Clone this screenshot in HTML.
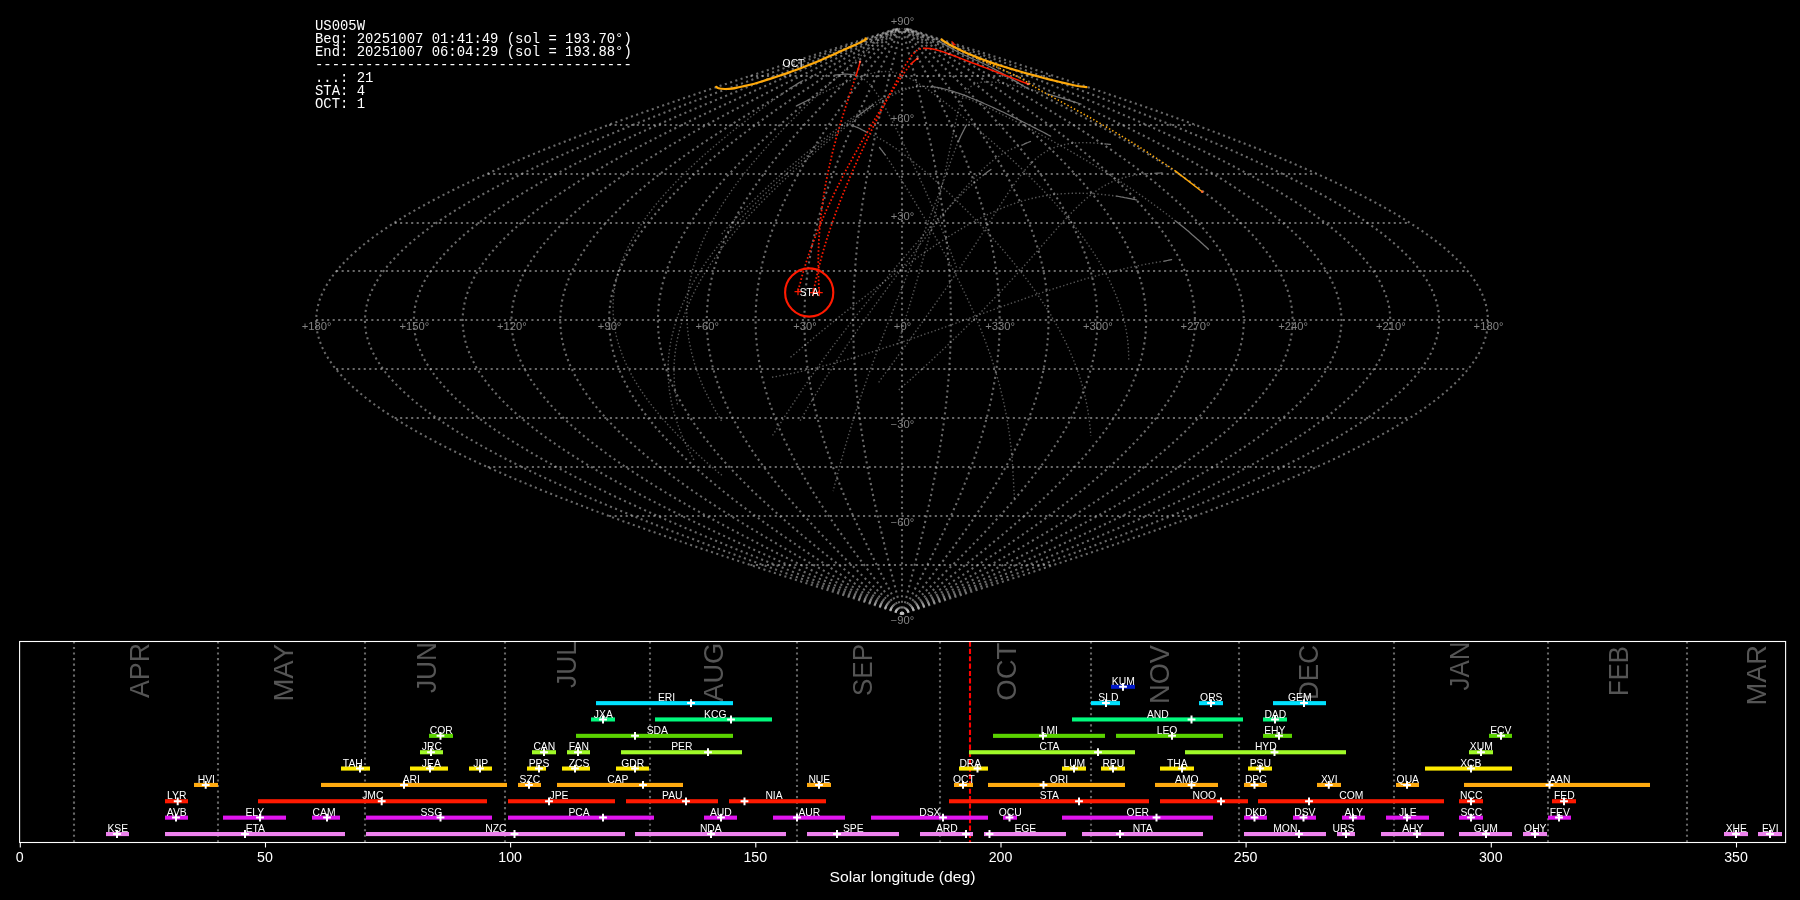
<!DOCTYPE html>
<html><head><meta charset="utf-8"><title>US005W shower association</title>
<style>html,body{margin:0;padding:0;background:#000;overflow:hidden}svg{display:block}text{font-family:"Liberation Sans",sans-serif}.mono{font-family:"Liberation Mono",monospace;font-size:13.9px;fill:#fff;white-space:pre}.g{fill:none;stroke:#c0c0c0;stroke-opacity:.55;stroke-width:2.08;stroke-dasharray:2.08 3.44}.fg{fill:none;stroke:#fff;stroke-opacity:.34;stroke-width:1.39;stroke-dasharray:1.39 2.29}.gl{font-size:10.3px;fill:#828282;text-anchor:middle}.sl{font-size:11.2px;fill:#fff;text-anchor:middle}.mo{font-size:28.3px;fill:#555;text-anchor:end}.tk{font-size:14.2px;fill:#fff;text-anchor:middle}</style></head><body>
<svg width="1800" height="900" viewBox="0 0 1800 900">
<defs><filter id="nf" x="0" y="0" width="100%" height="100%" filterUnits="userSpaceOnUse" color-interpolation-filters="sRGB"><feColorMatrix type="matrix" values="1 0 0 0 0 0 1 0 0 0 0 0 1 0 0 0 0 0 1 0"/></filter></defs>
<rect width="1800" height="900" fill="#000"/>
<g filter="url(#nf)">
<g class="g">
<path d="M902 613.9 L922.5 607.4 L942.9 600.8 L963.3 594.3 L983.6 587.8 L1003.8 581.3 L1023.9 574.8 L1043.8 568.2 L1063.6 561.7 L1083.1 555.2 L1102.5 548.7 L1121.6 542.1 L1140.4 535.6 L1158.9 529.1 L1177.1 522.6 L1195 516.1 L1212.6 509.5 L1229.7 503 L1246.5 496.5 L1262.8 490 L1278.7 483.4 L1294.1 476.9 L1309.1 470.4 L1323.6 463.9 L1337.5 457.4 L1350.9 450.8 L1363.8 444.3 L1376.1 437.8 L1387.8 431.3 L1399 424.8 L1409.5 418.2 L1419.4 411.7 L1428.7 405.2 L1437.3 398.7 L1445.3 392.1 L1452.7 385.6 L1459.3 379.1 L1465.3 372.6 L1470.6 366.1 L1475.2 359.5 L1479.1 353 L1482.3 346.5 L1484.8 340 L1486.6 333.4 L1487.6 326.9 L1488 320.4 L1487.6 313.9 L1486.6 307.4 L1484.8 300.8 L1482.3 294.3 L1479.1 287.8 L1475.2 281.3 L1470.6 274.7 L1465.3 268.2 L1459.3 261.7 L1452.7 255.2 L1445.3 248.7 L1437.3 242.1 L1428.7 235.6 L1419.4 229.1 L1409.5 222.6 L1399 216 L1387.8 209.5 L1376.1 203 L1363.8 196.5 L1350.9 190 L1337.5 183.4 L1323.6 176.9 L1309.1 170.4 L1294.1 163.9 L1278.7 157.3 L1262.8 150.8 L1246.5 144.3 L1229.7 137.8 L1212.6 131.3 L1195 124.7 L1177.1 118.2 L1158.9 111.7 L1140.4 105.2 L1121.6 98.7 L1102.5 92.1 L1083.1 85.6 L1063.6 79.1 L1043.8 72.6 L1023.9 66 L1003.8 59.5 L983.6 53 L963.3 46.5 L942.9 40 L922.5 33.4 L907.2 28.5"/>
<path d="M902 613.9 L920.8 607.4 L939.5 600.8 L958.2 594.3 L976.8 587.8 L995.3 581.3 L1013.7 574.8 L1032 568.2 L1050.1 561.7 L1068 555.2 L1085.8 548.7 L1103.3 542.1 L1120.5 535.6 L1137.5 529.1 L1154.2 522.6 L1170.6 516.1 L1186.7 509.5 L1202.4 503 L1217.8 496.5 L1232.7 490 L1247.3 483.4 L1261.5 476.9 L1275.2 470.4 L1288.4 463.9 L1301.2 457.4 L1313.5 450.8 L1325.3 444.3 L1336.6 437.8 L1347.3 431.3 L1357.6 424.8 L1367.2 418.2 L1376.3 411.7 L1384.8 405.2 L1392.7 398.7 L1400.1 392.1 L1406.8 385.6 L1412.9 379.1 L1418.4 372.6 L1423.2 366.1 L1427.4 359.5 L1431 353 L1433.9 346.5 L1436.2 340 L1437.9 333.4 L1438.8 326.9 L1439.2 320.4 L1438.8 313.9 L1437.9 307.4 L1436.2 300.8 L1433.9 294.3 L1431 287.8 L1427.4 281.3 L1423.2 274.7 L1418.4 268.2 L1412.9 261.7 L1406.8 255.2 L1400.1 248.7 L1392.7 242.1 L1384.8 235.6 L1376.3 229.1 L1367.2 222.6 L1357.6 216 L1347.3 209.5 L1336.6 203 L1325.3 196.5 L1313.5 190 L1301.2 183.4 L1288.4 176.9 L1275.2 170.4 L1261.5 163.9 L1247.3 157.3 L1232.7 150.8 L1217.8 144.3 L1202.4 137.8 L1186.7 131.3 L1170.6 124.7 L1154.2 118.2 L1137.5 111.7 L1120.5 105.2 L1103.3 98.7 L1085.8 92.1 L1068 85.6 L1050.1 79.1 L1032 72.6 L1013.7 66 L995.3 59.5 L976.8 53 L958.2 46.5 L939.5 40 L920.8 33.4 L906.7 28.5"/>
<path d="M902 613.9 L919.1 607.4 L936.1 600.8 L953.1 594.3 L970 587.8 L986.8 581.3 L1003.6 574.8 L1020.2 568.2 L1036.6 561.7 L1052.9 555.2 L1069.1 548.7 L1085 542.1 L1100.7 535.6 L1116.1 529.1 L1131.3 522.6 L1146.2 516.1 L1160.8 509.5 L1175.1 503 L1189.1 496.5 L1202.7 490 L1215.9 483.4 L1228.8 476.9 L1241.2 470.4 L1253.3 463.9 L1264.9 457.4 L1276.1 450.8 L1286.8 444.3 L1297.1 437.8 L1306.9 431.3 L1316.1 424.8 L1324.9 418.2 L1333.2 411.7 L1340.9 405.2 L1348.1 398.7 L1354.8 392.1 L1360.9 385.6 L1366.4 379.1 L1371.4 372.6 L1375.8 366.1 L1379.7 359.5 L1382.9 353 L1385.6 346.5 L1387.7 340 L1389.2 333.4 L1390 326.9 L1390.3 320.4 L1390 313.9 L1389.2 307.4 L1387.7 300.8 L1385.6 294.3 L1382.9 287.8 L1379.7 281.3 L1375.8 274.7 L1371.4 268.2 L1366.4 261.7 L1360.9 255.2 L1354.8 248.7 L1348.1 242.1 L1340.9 235.6 L1333.2 229.1 L1324.9 222.6 L1316.1 216 L1306.9 209.5 L1297.1 203 L1286.8 196.5 L1276.1 190 L1264.9 183.4 L1253.3 176.9 L1241.2 170.4 L1228.8 163.9 L1215.9 157.3 L1202.7 150.8 L1189.1 144.3 L1175.1 137.8 L1160.8 131.3 L1146.2 124.7 L1131.3 118.2 L1116.1 111.7 L1100.7 105.2 L1085 98.7 L1069.1 92.1 L1052.9 85.6 L1036.6 79.1 L1020.2 72.6 L1003.6 66 L986.8 59.5 L970 53 L953.1 46.5 L936.1 40 L919.1 33.4 L906.3 28.5"/>
<path d="M902 613.9 L917.4 607.4 L932.7 600.8 L948 594.3 L963.2 587.8 L978.4 581.3 L993.4 574.8 L1008.4 568.2 L1023.2 561.7 L1037.9 555.2 L1052.4 548.7 L1066.7 542.1 L1080.8 535.6 L1094.7 529.1 L1108.4 522.6 L1121.8 516.1 L1134.9 509.5 L1147.8 503 L1160.4 496.5 L1172.6 490 L1184.5 483.4 L1196.1 476.9 L1207.3 470.4 L1218.2 463.9 L1228.6 457.4 L1238.7 450.8 L1248.4 444.3 L1257.6 437.8 L1266.4 431.3 L1274.7 424.8 L1282.6 418.2 L1290.1 411.7 L1297 405.2 L1303.5 398.7 L1309.5 392.1 L1315 385.6 L1320 379.1 L1324.5 372.6 L1328.5 366.1 L1331.9 359.5 L1334.8 353 L1337.2 346.5 L1339.1 340 L1340.4 333.4 L1341.2 326.9 L1341.5 320.4 L1341.2 313.9 L1340.4 307.4 L1339.1 300.8 L1337.2 294.3 L1334.8 287.8 L1331.9 281.3 L1328.5 274.7 L1324.5 268.2 L1320 261.7 L1315 255.2 L1309.5 248.7 L1303.5 242.1 L1297 235.6 L1290.1 229.1 L1282.6 222.6 L1274.7 216 L1266.4 209.5 L1257.6 203 L1248.4 196.5 L1238.7 190 L1228.6 183.4 L1218.2 176.9 L1207.3 170.4 L1196.1 163.9 L1184.5 157.3 L1172.6 150.8 L1160.4 144.3 L1147.8 137.8 L1134.9 131.3 L1121.8 124.7 L1108.4 118.2 L1094.7 111.7 L1080.8 105.2 L1066.7 98.7 L1052.4 92.1 L1037.9 85.6 L1023.2 79.1 L1008.4 72.6 L993.4 66 L978.4 59.5 L963.2 53 L948 46.5 L932.7 40 L917.4 33.4 L905.9 28.5"/>
<path d="M902 613.9 L915.7 607.4 L929.3 600.8 L942.9 594.3 L956.4 587.8 L969.9 581.3 L983.3 574.8 L996.6 568.2 L1009.7 561.7 L1022.8 555.2 L1035.7 548.7 L1048.4 542.1 L1060.9 535.6 L1073.3 529.1 L1085.4 522.6 L1097.4 516.1 L1109.1 509.5 L1120.5 503 L1131.7 496.5 L1142.5 490 L1153.1 483.4 L1163.4 476.9 L1173.4 470.4 L1183.1 463.9 L1192.3 457.4 L1201.3 450.8 L1209.9 444.3 L1218.1 437.8 L1225.9 431.3 L1233.3 424.8 L1240.4 418.2 L1247 411.7 L1253.2 405.2 L1258.9 398.7 L1264.2 392.1 L1269.1 385.6 L1273.6 379.1 L1277.6 372.6 L1281.1 366.1 L1284.1 359.5 L1286.8 353 L1288.9 346.5 L1290.5 340 L1291.7 333.4 L1292.4 326.9 L1292.7 320.4 L1292.4 313.9 L1291.7 307.4 L1290.5 300.8 L1288.9 294.3 L1286.8 287.8 L1284.1 281.3 L1281.1 274.7 L1277.6 268.2 L1273.6 261.7 L1269.1 255.2 L1264.2 248.7 L1258.9 242.1 L1253.2 235.6 L1247 229.1 L1240.4 222.6 L1233.3 216 L1225.9 209.5 L1218.1 203 L1209.9 196.5 L1201.3 190 L1192.3 183.4 L1183.1 176.9 L1173.4 170.4 L1163.4 163.9 L1153.1 157.3 L1142.5 150.8 L1131.7 144.3 L1120.5 137.8 L1109.1 131.3 L1097.4 124.7 L1085.4 118.2 L1073.3 111.7 L1060.9 105.2 L1048.4 98.7 L1035.7 92.1 L1022.8 85.6 L1009.7 79.1 L996.6 72.6 L983.3 66 L969.9 59.5 L956.4 53 L942.9 46.5 L929.3 40 L915.7 33.4 L905.5 28.5"/>
<path d="M902 613.9 L914 607.4 L925.9 600.8 L937.8 594.3 L949.6 587.8 L961.4 581.3 L973.1 574.8 L984.7 568.2 L996.3 561.7 L1007.7 555.2 L1019 548.7 L1030.1 542.1 L1041.1 535.6 L1051.9 529.1 L1062.5 522.6 L1073 516.1 L1083.2 509.5 L1093.2 503 L1103 496.5 L1112.5 490 L1121.8 483.4 L1130.8 476.9 L1139.5 470.4 L1147.9 463.9 L1156.1 457.4 L1163.9 450.8 L1171.4 444.3 L1178.6 437.8 L1185.4 431.3 L1191.9 424.8 L1198.1 418.2 L1203.8 411.7 L1209.3 405.2 L1214.3 398.7 L1219 392.1 L1223.2 385.6 L1227.1 379.1 L1230.6 372.6 L1233.7 366.1 L1236.4 359.5 L1238.7 353 L1240.5 346.5 L1242 340 L1243 333.4 L1243.6 326.9 L1243.9 320.4 L1243.6 313.9 L1243 307.4 L1242 300.8 L1240.5 294.3 L1238.7 287.8 L1236.4 281.3 L1233.7 274.7 L1230.6 268.2 L1227.1 261.7 L1223.2 255.2 L1219 248.7 L1214.3 242.1 L1209.3 235.6 L1203.8 229.1 L1198.1 222.6 L1191.9 216 L1185.4 209.5 L1178.6 203 L1171.4 196.5 L1163.9 190 L1156.1 183.4 L1147.9 176.9 L1139.5 170.4 L1130.8 163.9 L1121.8 157.3 L1112.5 150.8 L1103 144.3 L1093.2 137.8 L1083.2 131.3 L1073 124.7 L1062.5 118.2 L1051.9 111.7 L1041.1 105.2 L1030.1 98.7 L1019 92.1 L1007.7 85.6 L996.3 79.1 L984.7 72.6 L973.1 66 L961.4 59.5 L949.6 53 L937.8 46.5 L925.9 40 L914 33.4 L905 28.5"/>
<path d="M902 613.9 L912.3 607.4 L922.5 600.8 L932.7 594.3 L942.8 587.8 L952.9 581.3 L963 574.8 L972.9 568.2 L982.8 561.7 L992.6 555.2 L1002.3 548.7 L1011.8 542.1 L1021.2 535.6 L1030.5 529.1 L1039.6 522.6 L1048.5 516.1 L1057.3 509.5 L1065.9 503 L1074.3 496.5 L1082.4 490 L1090.4 483.4 L1098.1 476.9 L1105.6 470.4 L1112.8 463.9 L1119.8 457.4 L1126.5 450.8 L1132.9 444.3 L1139.1 437.8 L1144.9 431.3 L1150.5 424.8 L1155.8 418.2 L1160.7 411.7 L1165.4 405.2 L1169.7 398.7 L1173.7 392.1 L1177.4 385.6 L1180.7 379.1 L1183.7 372.6 L1186.3 366.1 L1188.6 359.5 L1190.6 353 L1192.2 346.5 L1193.4 340 L1194.3 333.4 L1194.8 326.9 L1195 320.4 L1194.8 313.9 L1194.3 307.4 L1193.4 300.8 L1192.2 294.3 L1190.6 287.8 L1188.6 281.3 L1186.3 274.7 L1183.7 268.2 L1180.7 261.7 L1177.4 255.2 L1173.7 248.7 L1169.7 242.1 L1165.4 235.6 L1160.7 229.1 L1155.8 222.6 L1150.5 216 L1144.9 209.5 L1139.1 203 L1132.9 196.5 L1126.5 190 L1119.8 183.4 L1112.8 176.9 L1105.6 170.4 L1098.1 163.9 L1090.4 157.3 L1082.4 150.8 L1074.3 144.3 L1065.9 137.8 L1057.3 131.3 L1048.5 124.7 L1039.6 118.2 L1030.5 111.7 L1021.2 105.2 L1011.8 98.7 L1002.3 92.1 L992.6 85.6 L982.8 79.1 L972.9 72.6 L963 66 L952.9 59.5 L942.8 53 L932.7 46.5 L922.5 40 L912.3 33.4 L904.6 28.5"/>
<path d="M902 613.9 L910.6 607.4 L919.1 600.8 L927.6 594.3 L936 587.8 L944.4 581.3 L952.8 574.8 L961.1 568.2 L969.3 561.7 L977.5 555.2 L985.6 548.7 L993.5 542.1 L1001.4 535.6 L1009.1 529.1 L1016.7 522.6 L1024.1 516.1 L1031.4 509.5 L1038.6 503 L1045.6 496.5 L1052.4 490 L1059 483.4 L1065.4 476.9 L1071.6 470.4 L1077.7 463.9 L1083.5 457.4 L1089.1 450.8 L1094.4 444.3 L1099.6 437.8 L1104.5 431.3 L1109.1 424.8 L1113.5 418.2 L1117.6 411.7 L1121.5 405.2 L1125.1 398.7 L1128.4 392.1 L1131.5 385.6 L1134.2 379.1 L1136.7 372.6 L1138.9 366.1 L1140.9 359.5 L1142.5 353 L1143.8 346.5 L1144.9 340 L1145.6 333.4 L1146 326.9 L1146.2 320.4 L1146 313.9 L1145.6 307.4 L1144.9 300.8 L1143.8 294.3 L1142.5 287.8 L1140.9 281.3 L1138.9 274.7 L1136.7 268.2 L1134.2 261.7 L1131.5 255.2 L1128.4 248.7 L1125.1 242.1 L1121.5 235.6 L1117.6 229.1 L1113.5 222.6 L1109.1 216 L1104.5 209.5 L1099.6 203 L1094.4 196.5 L1089.1 190 L1083.5 183.4 L1077.7 176.9 L1071.6 170.4 L1065.4 163.9 L1059 157.3 L1052.4 150.8 L1045.6 144.3 L1038.6 137.8 L1031.4 131.3 L1024.1 124.7 L1016.7 118.2 L1009.1 111.7 L1001.4 105.2 L993.5 98.7 L985.6 92.1 L977.5 85.6 L969.3 79.1 L961.1 72.6 L952.8 66 L944.4 59.5 L936 53 L927.6 46.5 L919.1 40 L910.6 33.4 L904.2 28.5"/>
<path d="M902 613.9 L908.9 607.4 L915.7 600.8 L922.5 594.3 L929.2 587.8 L936 581.3 L942.7 574.8 L949.3 568.2 L955.9 561.7 L962.4 555.2 L968.9 548.7 L975.2 542.1 L981.5 535.6 L987.7 529.1 L993.7 522.6 L999.7 516.1 L1005.6 509.5 L1011.3 503 L1016.9 496.5 L1022.3 490 L1027.6 483.4 L1032.7 476.9 L1037.7 470.4 L1042.6 463.9 L1047.2 457.4 L1051.7 450.8 L1056 444.3 L1060.1 437.8 L1064 431.3 L1067.7 424.8 L1071.2 418.2 L1074.5 411.7 L1077.6 405.2 L1080.5 398.7 L1083.1 392.1 L1085.6 385.6 L1087.8 379.1 L1089.8 372.6 L1091.6 366.1 L1093.1 359.5 L1094.4 353 L1095.5 346.5 L1096.3 340 L1096.9 333.4 L1097.2 326.9 L1097.4 320.4 L1097.2 313.9 L1096.9 307.4 L1096.3 300.8 L1095.5 294.3 L1094.4 287.8 L1093.1 281.3 L1091.6 274.7 L1089.8 268.2 L1087.8 261.7 L1085.6 255.2 L1083.1 248.7 L1080.5 242.1 L1077.6 235.6 L1074.5 229.1 L1071.2 222.6 L1067.7 216 L1064 209.5 L1060.1 203 L1056 196.5 L1051.7 190 L1047.2 183.4 L1042.6 176.9 L1037.7 170.4 L1032.7 163.9 L1027.6 157.3 L1022.3 150.8 L1016.9 144.3 L1011.3 137.8 L1005.6 131.3 L999.7 124.7 L993.7 118.2 L987.7 111.7 L981.5 105.2 L975.2 98.7 L968.9 92.1 L962.4 85.6 L955.9 79.1 L949.3 72.6 L942.7 66 L936 59.5 L929.2 53 L922.5 46.5 L915.7 40 L908.9 33.4 L903.8 28.5"/>
<path d="M902 613.9 L907.2 607.4 L912.3 600.8 L917.4 594.3 L922.4 587.8 L927.5 581.3 L932.5 574.8 L937.5 568.2 L942.4 561.7 L947.3 555.2 L952.2 548.7 L956.9 542.1 L961.6 535.6 L966.3 529.1 L970.8 522.6 L975.3 516.1 L979.7 509.5 L984 503 L988.2 496.5 L992.2 490 L996.2 483.4 L1000.1 476.9 L1003.8 470.4 L1007.4 463.9 L1010.9 457.4 L1014.3 450.8 L1017.5 444.3 L1020.6 437.8 L1023.5 431.3 L1026.3 424.8 L1028.9 418.2 L1031.4 411.7 L1033.7 405.2 L1035.9 398.7 L1037.9 392.1 L1039.7 385.6 L1041.4 379.1 L1042.9 372.6 L1044.2 366.1 L1045.3 359.5 L1046.3 353 L1047.1 346.5 L1047.7 340 L1048.2 333.4 L1048.4 326.9 L1048.5 320.4 L1048.4 313.9 L1048.2 307.4 L1047.7 300.8 L1047.1 294.3 L1046.3 287.8 L1045.3 281.3 L1044.2 274.7 L1042.9 268.2 L1041.4 261.7 L1039.7 255.2 L1037.9 248.7 L1035.9 242.1 L1033.7 235.6 L1031.4 229.1 L1028.9 222.6 L1026.3 216 L1023.5 209.5 L1020.6 203 L1017.5 196.5 L1014.3 190 L1010.9 183.4 L1007.4 176.9 L1003.8 170.4 L1000.1 163.9 L996.2 157.3 L992.2 150.8 L988.2 144.3 L984 137.8 L979.7 131.3 L975.3 124.7 L970.8 118.2 L966.3 111.7 L961.6 105.2 L956.9 98.7 L952.2 92.1 L947.3 85.6 L942.4 79.1 L937.5 72.6 L932.5 66 L927.5 59.5 L922.4 53 L917.4 46.5 L912.3 40 L907.2 33.4 L903.3 28.5"/>
<path d="M902 613.9 L905.5 607.4 L908.9 600.8 L912.3 594.3 L915.6 587.8 L919 581.3 L922.4 574.8 L925.7 568.2 L929 561.7 L932.2 555.2 L935.5 548.7 L938.6 542.1 L941.8 535.6 L944.9 529.1 L947.9 522.6 L950.9 516.1 L953.8 509.5 L956.7 503 L959.5 496.5 L962.2 490 L964.8 483.4 L967.4 476.9 L969.9 470.4 L972.3 463.9 L974.6 457.4 L976.9 450.8 L979 444.3 L981.1 437.8 L983 431.3 L984.9 424.8 L986.6 418.2 L988.3 411.7 L989.8 405.2 L991.3 398.7 L992.6 392.1 L993.8 385.6 L994.9 379.1 L995.9 372.6 L996.8 366.1 L997.6 359.5 L998.2 353 L998.8 346.5 L999.2 340 L999.5 333.4 L999.6 326.9 L999.7 320.4 L999.6 313.9 L999.5 307.4 L999.2 300.8 L998.8 294.3 L998.2 287.8 L997.6 281.3 L996.8 274.7 L995.9 268.2 L994.9 261.7 L993.8 255.2 L992.6 248.7 L991.3 242.1 L989.8 235.6 L988.3 229.1 L986.6 222.6 L984.9 216 L983 209.5 L981.1 203 L979 196.5 L976.9 190 L974.6 183.4 L972.3 176.9 L969.9 170.4 L967.4 163.9 L964.8 157.3 L962.2 150.8 L959.5 144.3 L956.7 137.8 L953.8 131.3 L950.9 124.7 L947.9 118.2 L944.9 111.7 L941.8 105.2 L938.6 98.7 L935.5 92.1 L932.2 85.6 L929 79.1 L925.7 72.6 L922.4 66 L919 59.5 L915.6 53 L912.3 46.5 L908.9 40 L905.5 33.4 L902.9 28.5"/>
<path d="M902 613.9 L903.8 607.4 L905.5 600.8 L907.2 594.3 L908.8 587.8 L910.5 581.3 L912.2 574.8 L913.9 568.2 L915.5 561.7 L917.1 555.2 L918.8 548.7 L920.3 542.1 L921.9 535.6 L923.5 529.1 L925 522.6 L926.5 516.1 L927.9 509.5 L929.4 503 L930.8 496.5 L932.1 490 L933.4 483.4 L934.7 476.9 L936 470.4 L937.2 463.9 L938.3 457.4 L939.5 450.8 L940.5 444.3 L941.6 437.8 L942.5 431.3 L943.5 424.8 L944.3 418.2 L945.2 411.7 L945.9 405.2 L946.7 398.7 L947.3 392.1 L947.9 385.6 L948.5 379.1 L949 372.6 L949.4 366.1 L949.8 359.5 L950.1 353 L950.4 346.5 L950.6 340 L950.8 333.4 L950.8 326.9 L950.9 320.4 L950.8 313.9 L950.8 307.4 L950.6 300.8 L950.4 294.3 L950.1 287.8 L949.8 281.3 L949.4 274.7 L949 268.2 L948.5 261.7 L947.9 255.2 L947.3 248.7 L946.7 242.1 L945.9 235.6 L945.2 229.1 L944.3 222.6 L943.5 216 L942.5 209.5 L941.6 203 L940.5 196.5 L939.5 190 L938.3 183.4 L937.2 176.9 L936 170.4 L934.7 163.9 L933.4 157.3 L932.1 150.8 L930.8 144.3 L929.4 137.8 L927.9 131.3 L926.5 124.7 L925 118.2 L923.5 111.7 L921.9 105.2 L920.3 98.7 L918.8 92.1 L917.1 85.6 L915.5 79.1 L913.9 72.6 L912.2 66 L910.5 59.5 L908.8 53 L907.2 46.5 L905.5 40 L903.8 33.4 L902.5 28.5"/>
<path d="M902 613.9 L902 607.4 L902 600.8 L902 594.3 L902 587.8 L902 581.3 L902 574.8 L902 568.2 L902 561.7 L902 555.2 L902 548.7 L902 542.1 L902 535.6 L902 529.1 L902 522.6 L902 516.1 L902 509.5 L902 503 L902 496.5 L902 490 L902 483.4 L902 476.9 L902 470.4 L902 463.9 L902 457.4 L902 450.8 L902 444.3 L902 437.8 L902 431.3 L902 424.8 L902 418.2 L902 411.7 L902 405.2 L902 398.7 L902 392.1 L902 385.6 L902 379.1 L902 372.6 L902 366.1 L902 359.5 L902 353 L902 346.5 L902 340 L902 333.4 L902 326.9 L902 320.4 L902 313.9 L902 307.4 L902 300.8 L902 294.3 L902 287.8 L902 281.3 L902 274.7 L902 268.2 L902 261.7 L902 255.2 L902 248.7 L902 242.1 L902 235.6 L902 229.1 L902 222.6 L902 216 L902 209.5 L902 203 L902 196.5 L902 190 L902 183.4 L902 176.9 L902 170.4 L902 163.9 L902 157.3 L902 150.8 L902 144.3 L902 137.8 L902 131.3 L902 124.7 L902 118.2 L902 111.7 L902 105.2 L902 98.7 L902 92.1 L902 85.6 L902 79.1 L902 72.6 L902 66 L902 59.5 L902 53 L902 46.5 L902 40 L902 33.4 L902 28.5"/>
<path d="M902 613.9 L900.3 607.4 L898.6 600.8 L896.9 594.3 L895.3 587.8 L893.6 581.3 L891.9 574.8 L890.2 568.2 L888.6 561.7 L887 555.2 L885.3 548.7 L883.8 542.1 L882.2 535.6 L880.6 529.1 L879.1 522.6 L877.6 516.1 L876.2 509.5 L874.7 503 L873.3 496.5 L872 490 L870.7 483.4 L869.4 476.9 L868.1 470.4 L866.9 463.9 L865.8 457.4 L864.6 450.8 L863.6 444.3 L862.5 437.8 L861.6 431.3 L860.6 424.8 L859.8 418.2 L858.9 411.7 L858.2 405.2 L857.4 398.7 L856.8 392.1 L856.2 385.6 L855.6 379.1 L855.1 372.6 L854.7 366.1 L854.3 359.5 L854 353 L853.7 346.5 L853.5 340 L853.3 333.4 L853.3 326.9 L853.2 320.4 L853.3 313.9 L853.3 307.4 L853.5 300.8 L853.7 294.3 L854 287.8 L854.3 281.3 L854.7 274.7 L855.1 268.2 L855.6 261.7 L856.2 255.2 L856.8 248.7 L857.4 242.1 L858.2 235.6 L858.9 229.1 L859.8 222.6 L860.6 216 L861.6 209.5 L862.5 203 L863.6 196.5 L864.6 190 L865.8 183.4 L866.9 176.9 L868.1 170.4 L869.4 163.9 L870.7 157.3 L872 150.8 L873.3 144.3 L874.7 137.8 L876.2 131.3 L877.6 124.7 L879.1 118.2 L880.6 111.7 L882.2 105.2 L883.8 98.7 L885.3 92.1 L887 85.6 L888.6 79.1 L890.2 72.6 L891.9 66 L893.6 59.5 L895.3 53 L896.9 46.5 L898.6 40 L900.3 33.4 L901.6 28.5"/>
<path d="M902 613.9 L898.6 607.4 L895.2 600.8 L891.8 594.3 L888.5 587.8 L885.1 581.3 L881.7 574.8 L878.4 568.2 L875.1 561.7 L871.9 555.2 L868.6 548.7 L865.5 542.1 L862.3 535.6 L859.2 529.1 L856.2 522.6 L853.2 516.1 L850.3 509.5 L847.4 503 L844.6 496.5 L841.9 490 L839.3 483.4 L836.7 476.9 L834.2 470.4 L831.8 463.9 L829.5 457.4 L827.2 450.8 L825.1 444.3 L823 437.8 L821.1 431.3 L819.2 424.8 L817.5 418.2 L815.8 411.7 L814.3 405.2 L812.8 398.7 L811.5 392.1 L810.3 385.6 L809.2 379.1 L808.2 372.6 L807.3 366.1 L806.5 359.5 L805.9 353 L805.3 346.5 L804.9 340 L804.6 333.4 L804.5 326.9 L804.4 320.4 L804.5 313.9 L804.6 307.4 L804.9 300.8 L805.3 294.3 L805.9 287.8 L806.5 281.3 L807.3 274.7 L808.2 268.2 L809.2 261.7 L810.3 255.2 L811.5 248.7 L812.8 242.1 L814.3 235.6 L815.8 229.1 L817.5 222.6 L819.2 216 L821.1 209.5 L823 203 L825.1 196.5 L827.2 190 L829.5 183.4 L831.8 176.9 L834.2 170.4 L836.7 163.9 L839.3 157.3 L841.9 150.8 L844.6 144.3 L847.4 137.8 L850.3 131.3 L853.2 124.7 L856.2 118.2 L859.2 111.7 L862.3 105.2 L865.5 98.7 L868.6 92.1 L871.9 85.6 L875.1 79.1 L878.4 72.6 L881.7 66 L885.1 59.5 L888.5 53 L891.8 46.5 L895.2 40 L898.6 33.4 L901.2 28.5"/>
<path d="M902 613.9 L896.9 607.4 L891.8 600.8 L886.7 594.3 L881.7 587.8 L876.6 581.3 L871.6 574.8 L866.6 568.2 L861.7 561.7 L856.8 555.2 L851.9 548.7 L847.2 542.1 L842.5 535.6 L837.8 529.1 L833.3 522.6 L828.8 516.1 L824.4 509.5 L820.1 503 L815.9 496.5 L811.9 490 L807.9 483.4 L804 476.9 L800.3 470.4 L796.7 463.9 L793.2 457.4 L789.8 450.8 L786.6 444.3 L783.5 437.8 L780.6 431.3 L777.8 424.8 L775.2 418.2 L772.7 411.7 L770.4 405.2 L768.2 398.7 L766.2 392.1 L764.4 385.6 L762.7 379.1 L761.2 372.6 L759.9 366.1 L758.8 359.5 L757.8 353 L757 346.5 L756.4 340 L755.9 333.4 L755.7 326.9 L755.6 320.4 L755.7 313.9 L755.9 307.4 L756.4 300.8 L757 294.3 L757.8 287.8 L758.8 281.3 L759.9 274.7 L761.2 268.2 L762.7 261.7 L764.4 255.2 L766.2 248.7 L768.2 242.1 L770.4 235.6 L772.7 229.1 L775.2 222.6 L777.8 216 L780.6 209.5 L783.5 203 L786.6 196.5 L789.8 190 L793.2 183.4 L796.7 176.9 L800.3 170.4 L804 163.9 L807.9 157.3 L811.9 150.8 L815.9 144.3 L820.1 137.8 L824.4 131.3 L828.8 124.7 L833.3 118.2 L837.8 111.7 L842.5 105.2 L847.2 98.7 L851.9 92.1 L856.8 85.6 L861.7 79.1 L866.6 72.6 L871.6 66 L876.6 59.5 L881.7 53 L886.7 46.5 L891.8 40 L896.9 33.4 L900.8 28.5"/>
<path d="M902 613.9 L895.2 607.4 L888.4 600.8 L881.6 594.3 L874.9 587.8 L868.1 581.3 L861.4 574.8 L854.8 568.2 L848.2 561.7 L841.7 555.2 L835.2 548.7 L828.9 542.1 L822.6 535.6 L816.4 529.1 L810.4 522.6 L804.4 516.1 L798.5 509.5 L792.8 503 L787.2 496.5 L781.8 490 L776.5 483.4 L771.4 476.9 L766.4 470.4 L761.5 463.9 L756.9 457.4 L752.4 450.8 L748.1 444.3 L744 437.8 L740.1 431.3 L736.4 424.8 L732.9 418.2 L729.6 411.7 L726.5 405.2 L723.6 398.7 L721 392.1 L718.5 385.6 L716.3 379.1 L714.3 372.6 L712.5 366.1 L711 359.5 L709.7 353 L708.6 346.5 L707.8 340 L707.2 333.4 L706.9 326.9 L706.7 320.4 L706.9 313.9 L707.2 307.4 L707.8 300.8 L708.6 294.3 L709.7 287.8 L711 281.3 L712.5 274.7 L714.3 268.2 L716.3 261.7 L718.5 255.2 L721 248.7 L723.6 242.1 L726.5 235.6 L729.6 229.1 L732.9 222.6 L736.4 216 L740.1 209.5 L744 203 L748.1 196.5 L752.4 190 L756.9 183.4 L761.5 176.9 L766.4 170.4 L771.4 163.9 L776.5 157.3 L781.8 150.8 L787.2 144.3 L792.8 137.8 L798.5 131.3 L804.4 124.7 L810.4 118.2 L816.4 111.7 L822.6 105.2 L828.9 98.7 L835.2 92.1 L841.7 85.6 L848.2 79.1 L854.8 72.6 L861.4 66 L868.1 59.5 L874.9 53 L881.6 46.5 L888.4 40 L895.2 33.4 L900.3 28.5"/>
<path d="M902 613.9 L893.5 607.4 L885 600.8 L876.5 594.3 L868.1 587.8 L859.7 581.3 L851.3 574.8 L843 568.2 L834.8 561.7 L826.6 555.2 L818.5 548.7 L810.6 542.1 L802.7 535.6 L795 529.1 L787.4 522.6 L780 516.1 L772.7 509.5 L765.5 503 L758.5 496.5 L751.7 490 L745.1 483.4 L738.7 476.9 L732.5 470.4 L726.4 463.9 L720.6 457.4 L715 450.8 L709.7 444.3 L704.5 437.8 L699.6 431.3 L695 424.8 L690.6 418.2 L686.5 411.7 L682.6 405.2 L679 398.7 L675.7 392.1 L672.6 385.6 L669.9 379.1 L667.4 372.6 L665.2 366.1 L663.2 359.5 L661.6 353 L660.3 346.5 L659.2 340 L658.5 333.4 L658.1 326.9 L657.9 320.4 L658.1 313.9 L658.5 307.4 L659.2 300.8 L660.3 294.3 L661.6 287.8 L663.2 281.3 L665.2 274.7 L667.4 268.2 L669.9 261.7 L672.6 255.2 L675.7 248.7 L679 242.1 L682.6 235.6 L686.5 229.1 L690.6 222.6 L695 216 L699.6 209.5 L704.5 203 L709.7 196.5 L715 190 L720.6 183.4 L726.4 176.9 L732.5 170.4 L738.7 163.9 L745.1 157.3 L751.7 150.8 L758.5 144.3 L765.5 137.8 L772.7 131.3 L780 124.7 L787.4 118.2 L795 111.7 L802.7 105.2 L810.6 98.7 L818.5 92.1 L826.6 85.6 L834.8 79.1 L843 72.6 L851.3 66 L859.7 59.5 L868.1 53 L876.5 46.5 L885 40 L893.5 33.4 L899.9 28.5"/>
<path d="M902 613.9 L891.8 607.4 L881.6 600.8 L871.4 594.3 L861.3 587.8 L851.2 581.3 L841.1 574.8 L831.2 568.2 L821.3 561.7 L811.5 555.2 L801.8 548.7 L792.3 542.1 L782.9 535.6 L773.6 529.1 L764.5 522.6 L755.6 516.1 L746.8 509.5 L738.2 503 L729.8 496.5 L721.7 490 L713.7 483.4 L706 476.9 L698.5 470.4 L691.3 463.9 L684.3 457.4 L677.6 450.8 L671.2 444.3 L665 437.8 L659.2 431.3 L653.6 424.8 L648.3 418.2 L643.4 411.7 L638.7 405.2 L634.4 398.7 L630.4 392.1 L626.7 385.6 L623.4 379.1 L620.4 372.6 L617.8 366.1 L615.5 359.5 L613.5 353 L611.9 346.5 L610.7 340 L609.8 333.4 L609.3 326.9 L609.1 320.4 L609.3 313.9 L609.8 307.4 L610.7 300.8 L611.9 294.3 L613.5 287.8 L615.5 281.3 L617.8 274.7 L620.4 268.2 L623.4 261.7 L626.7 255.2 L630.4 248.7 L634.4 242.1 L638.7 235.6 L643.4 229.1 L648.3 222.6 L653.6 216 L659.2 209.5 L665 203 L671.2 196.5 L677.6 190 L684.3 183.4 L691.3 176.9 L698.5 170.4 L706 163.9 L713.7 157.3 L721.7 150.8 L729.8 144.3 L738.2 137.8 L746.8 131.3 L755.6 124.7 L764.5 118.2 L773.6 111.7 L782.9 105.2 L792.3 98.7 L801.8 92.1 L811.5 85.6 L821.3 79.1 L831.2 72.6 L841.1 66 L851.2 59.5 L861.3 53 L871.4 46.5 L881.6 40 L891.8 33.4 L899.5 28.5"/>
<path d="M902 613.9 L890.1 607.4 L878.2 600.8 L866.3 594.3 L854.5 587.8 L842.7 581.3 L831 574.8 L819.4 568.2 L807.8 561.7 L796.4 555.2 L785.1 548.7 L774 542.1 L763 535.6 L752.2 529.1 L741.6 522.6 L731.1 516.1 L720.9 509.5 L710.9 503 L701.1 496.5 L691.6 490 L682.3 483.4 L673.3 476.9 L664.6 470.4 L656.2 463.9 L648 457.4 L640.2 450.8 L632.7 444.3 L625.5 437.8 L618.7 431.3 L612.2 424.8 L606 418.2 L600.3 411.7 L594.8 405.2 L589.8 398.7 L585.1 392.1 L580.9 385.6 L577 379.1 L573.5 372.6 L570.4 366.1 L567.7 359.5 L565.4 353 L563.6 346.5 L562.1 340 L561.1 333.4 L560.5 326.9 L560.2 320.4 L560.5 313.9 L561.1 307.4 L562.1 300.8 L563.6 294.3 L565.4 287.8 L567.7 281.3 L570.4 274.7 L573.5 268.2 L577 261.7 L580.9 255.2 L585.1 248.7 L589.8 242.1 L594.8 235.6 L600.3 229.1 L606 222.6 L612.2 216 L618.7 209.5 L625.5 203 L632.7 196.5 L640.2 190 L648 183.4 L656.2 176.9 L664.6 170.4 L673.3 163.9 L682.3 157.3 L691.6 150.8 L701.1 144.3 L710.9 137.8 L720.9 131.3 L731.1 124.7 L741.6 118.2 L752.2 111.7 L763 105.2 L774 98.7 L785.1 92.1 L796.4 85.6 L807.8 79.1 L819.4 72.6 L831 66 L842.7 59.5 L854.5 53 L866.3 46.5 L878.2 40 L890.1 33.4 L899.1 28.5"/>
<path d="M902 613.9 L888.4 607.4 L874.8 600.8 L861.2 594.3 L847.7 587.8 L834.2 581.3 L820.8 574.8 L807.5 568.2 L794.4 561.7 L781.3 555.2 L768.4 548.7 L755.7 542.1 L743.2 535.6 L730.8 529.1 L718.7 522.6 L706.7 516.1 L695 509.5 L683.6 503 L672.4 496.5 L661.6 490 L651 483.4 L640.7 476.9 L630.7 470.4 L621 463.9 L611.8 457.4 L602.8 450.8 L594.2 444.3 L586 437.8 L578.2 431.3 L570.8 424.8 L563.7 418.2 L557.1 411.7 L550.9 405.2 L545.2 398.7 L539.9 392.1 L535 385.6 L530.5 379.1 L526.5 372.6 L523 366.1 L520 359.5 L517.3 353 L515.2 346.5 L513.6 340 L512.4 333.4 L511.7 326.9 L511.4 320.4 L511.7 313.9 L512.4 307.4 L513.6 300.8 L515.2 294.3 L517.3 287.8 L520 281.3 L523 274.7 L526.5 268.2 L530.5 261.7 L535 255.2 L539.9 248.7 L545.2 242.1 L550.9 235.6 L557.1 229.1 L563.7 222.6 L570.8 216 L578.2 209.5 L586 203 L594.2 196.5 L602.8 190 L611.8 183.4 L621 176.9 L630.7 170.4 L640.7 163.9 L651 157.3 L661.6 150.8 L672.4 144.3 L683.6 137.8 L695 131.3 L706.7 124.7 L718.7 118.2 L730.8 111.7 L743.2 105.2 L755.7 98.7 L768.4 92.1 L781.3 85.6 L794.4 79.1 L807.5 72.6 L820.8 66 L834.2 59.5 L847.7 53 L861.2 46.5 L874.8 40 L888.4 33.4 L898.6 28.5"/>
<path d="M902 613.9 L886.7 607.4 L871.4 600.8 L856.1 594.3 L840.9 587.8 L825.7 581.3 L810.7 574.8 L795.7 568.2 L780.9 561.7 L766.2 555.2 L751.7 548.7 L737.4 542.1 L723.3 535.6 L709.4 529.1 L695.7 522.6 L682.3 516.1 L669.2 509.5 L656.3 503 L643.7 496.5 L631.5 490 L619.6 483.4 L608 476.9 L596.8 470.4 L585.9 463.9 L575.5 457.4 L565.4 450.8 L555.7 444.3 L546.5 437.8 L537.7 431.3 L529.4 424.8 L521.5 418.2 L514 411.7 L507.1 405.2 L500.6 398.7 L494.6 392.1 L489.1 385.6 L484.1 379.1 L479.6 372.6 L475.6 366.1 L472.2 359.5 L469.3 353 L466.9 346.5 L465 340 L463.7 333.4 L462.9 326.9 L462.6 320.4 L462.9 313.9 L463.7 307.4 L465 300.8 L466.9 294.3 L469.3 287.8 L472.2 281.3 L475.6 274.7 L479.6 268.2 L484.1 261.7 L489.1 255.2 L494.6 248.7 L500.6 242.1 L507.1 235.6 L514 229.1 L521.5 222.6 L529.4 216 L537.7 209.5 L546.5 203 L555.7 196.5 L565.4 190 L575.5 183.4 L585.9 176.9 L596.8 170.4 L608 163.9 L619.6 157.3 L631.5 150.8 L643.7 144.3 L656.3 137.8 L669.2 131.3 L682.3 124.7 L695.7 118.2 L709.4 111.7 L723.3 105.2 L737.4 98.7 L751.7 92.1 L766.2 85.6 L780.9 79.1 L795.7 72.6 L810.7 66 L825.7 59.5 L840.9 53 L856.1 46.5 L871.4 40 L886.7 33.4 L898.2 28.5"/>
<path d="M902 613.9 L885 607.4 L868 600.8 L851 594.3 L834.1 587.8 L817.3 581.3 L800.5 574.8 L783.9 568.2 L767.5 561.7 L751.2 555.2 L735 548.7 L719.1 542.1 L703.4 535.6 L688 529.1 L672.8 522.6 L657.9 516.1 L643.3 509.5 L629 503 L615 496.5 L601.4 490 L588.2 483.4 L575.3 476.9 L562.9 470.4 L550.8 463.9 L539.2 457.4 L528 450.8 L517.3 444.3 L507 437.8 L497.2 431.3 L488 424.8 L479.2 418.2 L470.9 411.7 L463.2 405.2 L456 398.7 L449.3 392.1 L443.2 385.6 L437.7 379.1 L432.7 372.6 L428.3 366.1 L424.4 359.5 L421.2 353 L418.5 346.5 L416.4 340 L414.9 333.4 L414.1 326.9 L413.8 320.4 L414.1 313.9 L414.9 307.4 L416.4 300.8 L418.5 294.3 L421.2 287.8 L424.4 281.3 L428.3 274.7 L432.7 268.2 L437.7 261.7 L443.2 255.2 L449.3 248.7 L456 242.1 L463.2 235.6 L470.9 229.1 L479.2 222.6 L488 216 L497.2 209.5 L507 203 L517.3 196.5 L528 190 L539.2 183.4 L550.8 176.9 L562.9 170.4 L575.3 163.9 L588.2 157.3 L601.4 150.8 L615 144.3 L629 137.8 L643.3 131.3 L657.9 124.7 L672.8 118.2 L688 111.7 L703.4 105.2 L719.1 98.7 L735 92.1 L751.2 85.6 L767.5 79.1 L783.9 72.6 L800.5 66 L817.3 59.5 L834.1 53 L851 46.5 L868 40 L885 33.4 L897.8 28.5"/>
<path d="M902 613.9 L883.3 607.4 L864.6 600.8 L845.9 594.3 L827.3 587.8 L808.8 581.3 L790.4 574.8 L772.1 568.2 L754 561.7 L736.1 555.2 L718.3 548.7 L700.8 542.1 L683.6 535.6 L666.6 529.1 L649.9 522.6 L633.5 516.1 L617.4 509.5 L601.7 503 L586.3 496.5 L571.4 490 L556.8 483.4 L542.6 476.9 L528.9 470.4 L515.7 463.9 L502.9 457.4 L490.6 450.8 L478.8 444.3 L467.5 437.8 L456.8 431.3 L446.5 424.8 L436.9 418.2 L427.8 411.7 L419.3 405.2 L411.4 398.7 L404 392.1 L397.3 385.6 L391.2 379.1 L385.7 372.6 L380.9 366.1 L376.7 359.5 L373.1 353 L370.2 346.5 L367.9 340 L366.2 333.4 L365.3 326.9 L364.9 320.4 L365.3 313.9 L366.2 307.4 L367.9 300.8 L370.2 294.3 L373.1 287.8 L376.7 281.3 L380.9 274.7 L385.7 268.2 L391.2 261.7 L397.3 255.2 L404 248.7 L411.4 242.1 L419.3 235.6 L427.8 229.1 L436.9 222.6 L446.5 216 L456.8 209.5 L467.5 203 L478.8 196.5 L490.6 190 L502.9 183.4 L515.7 176.9 L528.9 170.4 L542.6 163.9 L556.8 157.3 L571.4 150.8 L586.3 144.3 L601.7 137.8 L617.4 131.3 L633.5 124.7 L649.9 118.2 L666.6 111.7 L683.6 105.2 L700.8 98.7 L718.3 92.1 L736.1 85.6 L754 79.1 L772.1 72.6 L790.4 66 L808.8 59.5 L827.3 53 L845.9 46.5 L864.6 40 L883.3 33.4 L897.4 28.5"/>
<path d="M902 613.9 L881.6 607.4 L861.2 600.8 L840.8 594.3 L820.5 587.8 L800.3 581.3 L780.2 574.8 L760.3 568.2 L740.5 561.7 L721 555.2 L701.6 548.7 L682.5 542.1 L663.7 535.6 L645.2 529.1 L627 522.6 L609.1 516.1 L591.5 509.5 L574.4 503 L557.6 496.5 L541.3 490 L525.4 483.4 L510 476.9 L495 470.4 L480.5 463.9 L466.6 457.4 L453.2 450.8 L440.3 444.3 L428 437.8 L416.3 431.3 L405.1 424.8 L394.6 418.2 L384.7 411.7 L375.4 405.2 L366.8 398.7 L358.8 392.1 L351.4 385.6 L344.8 379.1 L338.8 372.6 L333.5 366.1 L328.9 359.5 L325 353 L321.8 346.5 L319.3 340 L317.5 333.4 L316.5 326.9 L316.1 320.4 L316.5 313.9 L317.5 307.4 L319.3 300.8 L321.8 294.3 L325 287.8 L328.9 281.3 L333.5 274.7 L338.8 268.2 L344.8 261.7 L351.4 255.2 L358.8 248.7 L366.8 242.1 L375.4 235.6 L384.7 229.1 L394.6 222.6 L405.1 216 L416.3 209.5 L428 203 L440.3 196.5 L453.2 190 L466.6 183.4 L480.5 176.9 L495 170.4 L510 163.9 L525.4 157.3 L541.3 150.8 L557.6 144.3 L574.4 137.8 L591.5 131.3 L609.1 124.7 L627 118.2 L645.2 111.7 L663.7 105.2 L682.5 98.7 L701.6 92.1 L721 85.6 L740.5 79.1 L760.3 72.6 L780.2 66 L800.3 59.5 L820.5 53 L840.8 46.5 L861.2 40 L881.6 33.4 L896.9 28.5"/>
<path d="M750.4 565 L1053.7 565"/>
<path d="M609.1 516 L1195 516"/>
<path d="M487.7 467 L1316.4 467"/>
<path d="M394.6 418 L1409.5 418"/>
<path d="M336.1 369 L1468 369"/>
<path d="M316.1 320 L1488 320"/>
<path d="M336.1 271 L1468 271"/>
<path d="M394.6 223 L1409.5 223"/>
<path d="M487.7 174 L1316.4 174"/>
<path d="M609.1 125 L1195 125"/>
<path d="M750.4 76 L1053.7 76"/>
</g>
<g class="fg">
<path d="M857.3 75.8 L859.6 76.7 L861.8 77.8 L863.8 79.1 L865.8 80.6 L867.6 82.2 L869.3 83.9 L871 85.8 L872.6 87.7 L874.2 89.8 L875.8 92 L877.3 94.3 L878.8 96.6 L880.2 99 L881.7 101.5 L883.1 104 L884.6 106.6 L886 109.2 L887.4 111.8 L888.9 114.5 L890.3 117.3 L891.7 120 L893.1 122.8 L894.6 125.6 L896 128.5 L897.4 131.3 L898.8 134.2 L900.3 137.1 L901.7 140.1 L903.1 143 L904.5 145.9 L905.9 148.9 L907.4 151.9 L908.8 154.9 L910.2 157.9 L911.6 160.9 L913 163.9 L914.5 166.9 L915.9 170 L917.3 173 L918.7 176.1 L920.1 179.1 L921.5 182.2 L922.9 185.3 L924.3 188.3 L925.6 191.4 L927 194.5 L928.4 197.6 L929.7 200.7 L931.1 203.8 L932.4 206.9 L933.8 210 L935.1 213.1 L936.4 216.2 L937.7 219.3 L939.1 222.5 L940.3 225.6 L941.6 228.7 L942.9 231.8 L944.2 235 L945.4 238.1 L946.6 241.2 L947.9 244.4 L949.1 247.5 L950.3 250.7 L951.5 253.8 L952.6 256.9 L953.8 260.1 L954.9 263.2 L956.1 266.4 L957.2 269.5 L957.2 269.5"/>
<path d="M790 88.3 L785.6 91.4 L781.3 94.5 L776.9 97.6 L772.6 100.7 L768.3 103.9 L764 107 L759.8 110.2 L755.5 113.4 L751.3 116.5 L747.2 119.7 L743.1 122.9 L739 126.1 L734.9 129.3 L730.9 132.5 L727 135.7 L723.1 138.9 L719.2 142.1 L715.4 145.3 L711.6 148.5 L707.9 151.7 L704.3 154.9 L700.7 158.1 L697.1 161.4 L693.7 164.6 L690.2 167.8 L686.9 171 L683.6 174.2 L680.4 177.5 L677.2 180.7 L674.1 183.9 L671.1 187.2 L668.1 190.4 L665.2 193.6 L662.4 196.8 L659.6 200.1 L656.9 203.3 L654.3 206.5 L651.8 209.8 L649.3 213 L646.9 216.2 L644.6 219.5 L642.4 222.7 L640.2 226 L638.1 229.2 L636.1 232.4 L634.2 235.7 L632.4 238.9 L630.6 242.1 L628.9 245.4 L627.3 248.6 L625.8 251.9 L624.4 255.1 L623 258.3 L621.8 261.6 L620.6 264.8 L619.5 268.1 L618.5 271.3 L617.6 274.6 L616.7 277.8 L616 281 L615.3 284.3 L614.7 287.5 L614.2 290.8 L613.8 294 L613.5 297.3 L613.3 300.5 L613.1 303.7 L613.1 307 L613.1 310.2 L613.2 313.5 L613.4 316.7 L613.7 320 L614.1 323.2 L614.5 326.4 L615.1 329.7 L615.7 332.9 L616.4 336.2 L617.2 339.4 L618.1 342.6 L619.1 345.9 L620.2 349.1 L621.3 352.4 L622.5 355.6 L623.9 358.9 L625.3 362.1 L626.7 365.3 L628.3 368.6 L630 371.8 L631.7 375.1 L633.5 378.3 L635.4 381.6 L637.4 384.8 L639.4 388 L641.6 391.3 L643.8 394.5 L646 397.8 L648.4 401 L650.8 404.2 L653.4 407.5 L656 410.7 L658.6 413.9 L661.3 417.2 L664.2 420.4 L667 423.7 L670 426.9 L673 430.1 L676.1 433.4 L679.2 436.6 L682.5 439.8 L685.7 443.1 L689.1 446.3 L692.5 449.5 L696 452.8 L699.5 456 L703.1 459.2 L706.7 462.4 L710.5 465.7 L714.2 468.9 L718 472.1 L721.9 475.3 L721.9 475.3"/>
<path d="M809.4 99.4 L814.5 96.9 L819.5 94.4 L824.5 92 L829.4 89.7 L834.2 87.5 L839 85.4 L843.6 83.3 L848.1 81.4 L852.5 79.6 L856.8 78 L860.9 76.5 L864.9 75.2 L868.8 74 L872.5 73.1 L876.2 72.4 L879.6 71.9 L883 71.6 L886.3 71.5 L889.5 71.7 L892.6 72.1 L895.7 72.8 L898.7 73.6 L901.8 74.7 L904.8 76 L907.9 77.4 L910.9 79 L914 80.7 L917.1 82.6 L920.3 84.6 L923.4 86.7 L926.7 88.9 L929.9 91.1 L933.2 93.5 L936.4 95.9 L939.8 98.4 L943.1 101 L946.5 103.6 L949.8 106.2 L953.2 108.9 L956.6 111.6 L960 114.4 L963.4 117.2 L966.8 120 L970.3 122.9 L973.7 125.7 L977.1 128.6 L980.5 131.5 L983.9 134.5 L987.3 137.4 L990.7 140.4 L994 143.3 L997.4 146.3 L1000.7 149.3 L1004.1 152.3 L1007.4 155.4 L1010.6 158.4 L1013.9 161.4 L1017.1 164.5 L1020.3 167.5 L1023.5 170.6 L1026.7 173.7 L1029.8 176.8 L1032.9 179.8 L1035.9 182.9 L1039 186 L1042 189.1 L1044.9 192.2 L1047.8 195.3 L1050.7 198.4 L1053.6 201.5 L1056.4 204.7 L1059.1 207.8 L1061.8 210.9 L1064.5 214 L1067.2 217.2 L1069.7 220.3 L1072.3 223.4 L1074.8 226.6 L1077.2 229.7 L1079.6 232.9 L1082 236 L1084.3 239.2 L1086.5 242.3 L1088.7 245.5 L1090.9 248.6 L1093 251.8 L1095 254.9 L1097 258.1 L1098.9 261.2 L1100.8 264.4 L1102.6 267.6 L1104.4 270.7 L1106.1 273.9 L1107.7 277 L1109.3 280.2 L1110.8 283.4 L1112.3 286.5 L1113.7 289.7 L1115 292.9 L1116.3 296 L1117.5 299.2 L1118.7 302.4 L1119.8 305.5 L1120.8 308.7 L1121.8 311.9 L1122.7 315 L1123.6 318.2 L1124.3 321.4 L1125.1 324.5 L1125.7 327.7 L1126.3 330.9 L1126.8 334 L1127.3 337.2 L1127.7 340.4 L1128 343.6 L1128.3 346.7 L1128.5 349.9 L1128.6 353.1 L1128.7 356.2 L1128.7 359.4 L1128.7 359.4"/>
<path d="M856.7 116.7 L853.4 119.1 L850 121.6 L846.7 124.1 L843.3 126.7 L839.9 129.3 L836.6 131.9 L833.2 134.5 L829.8 137.2 L826.4 139.9 L823 142.7 L819.6 145.4 L816.3 148.2 L812.9 151 L809.5 153.8 L806.2 156.6 L802.8 159.5 L799.5 162.4 L796.2 165.3 L792.9 168.1 L789.6 171.1 L786.4 174 L783.1 176.9 L779.9 179.8 L776.8 182.8 L773.6 185.8 L770.5 188.7 L767.4 191.7 L764.3 194.7 L761.2 197.7 L758.2 200.7 L755.3 203.7 L752.3 206.7 L749.4 209.7 L746.5 212.7 L743.7 215.8 L740.9 218.8 L738.2 221.8 L735.4 224.9 L732.8 227.9 L730.2 231 L727.6 234 L725 237.1 L722.5 240.1 L720.1 243.2 L717.7 246.3 L715.4 249.3 L713.1 252.4 L710.8 255.5 L708.6 258.6 L706.5 261.6 L704.4 264.7 L702.3 267.8 L700.3 270.9 L698.4 274 L696.5 277.1 L694.7 280.1 L692.9 283.2 L691.2 286.3 L689.6 289.4 L688 292.5 L686.5 295.6 L685 298.7 L683.6 301.8 L682.2 304.9 L680.9 308 L679.7 311.1 L678.5 314.2 L677.4 317.3 L676.4 320.4 L675.4 323.5 L674.4 326.6 L673.6 329.7 L672.8 332.8 L672 335.9 L671.4 339 L670.7 342.1 L670.2 345.1 L669.7 348.2 L669.3 351.3 L668.9 354.4 L668.6 357.5 L668.4 360.6 L668.2 363.7 L668.1 366.8 L668.1 369.9 L668.1 373 L668.2 376 L668.4 379.1 L668.6 382.2 L668.9 385.3 L669.2 388.3 L669.6 391.4 L670 394.5 L670.6 397.5 L671.1 400.6 L671.8 403.7 L672.5 406.7 L673.3 409.8 L674.1 412.8 L674.9 415.9 L675.9 418.9 L676.9 422 L677.9 425 L679 428 L680.2 431 L681.4 434.1 L682.7 437.1 L684 440.1 L685.3 443.1 L686.8 446.1 L688.2 449.1 L689.7 452 L691.3 455 L692.9 458 L694.5 460.9 L694.5 460.9"/>
<path d="M866.7 132.3 L869.4 133.4 L872.1 134.7 L874.8 136 L877.5 137.3 L880.1 138.8 L882.8 140.3 L885.4 141.8 L888.1 143.4 L890.7 145.1 L893.3 146.9 L896 148.7 L898.6 150.5 L901.2 152.4 L903.8 154.3 L906.4 156.3 L909.1 158.4 L911.7 160.4 L914.3 162.5 L916.9 164.7 L919.6 166.9 L922.2 169.1 L924.8 171.3 L927.4 173.6 L930.1 175.9 L932.7 178.2 L935.3 180.6 L938 183 L940.6 185.4 L943.2 187.8 L945.8 190.3 L948.4 192.7 L951.1 195.2 L953.7 197.7 L956.3 200.3 L958.9 202.8 L961.4 205.4 L964 207.9 L966.6 210.5 L969.2 213.1 L971.7 215.7 L974.3 218.4 L976.8 221 L979.3 223.7 L981.8 226.3 L984.3 229 L986.8 231.7 L989.2 234.4 L991.7 237.1 L994.1 239.8 L996.5 242.5 L998.9 245.2 L1001.3 248 L1003.6 250.7 L1006 253.5 L1008.3 256.2 L1010.6 259 L1012.8 261.7 L1015.1 264.5 L1017.3 267.3 L1019.5 270.1 L1021.7 272.9 L1023.8 275.6 L1025.9 278.4 L1028 281.2 L1030.1 284 L1032.1 286.8 L1034.1 289.6 L1036.1 292.4 L1038 295.2 L1039.9 298.1 L1041.8 300.9 L1043.7 303.7 L1045.5 306.5 L1047.3 309.3 L1049 312.1 L1050.8 314.9 L1052.4 317.8 L1054.1 320.6 L1055.7 323.4 L1057.3 326.2 L1058.8 329 L1060.4 331.8 L1061.8 334.7 L1063.3 337.5 L1064.7 340.3 L1066.1 343.1 L1067.4 345.9 L1068.7 348.7 L1069.9 351.5 L1071.1 354.3 L1072.3 357.1 L1073.5 359.9 L1074.6 362.7 L1075.6 365.5 L1076.7 368.3 L1077.7 371.1 L1078.6 373.9 L1079.5 376.6 L1080.4 379.4 L1081.3 382.2 L1082.1 384.9 L1082.8 387.7 L1083.6 390.4 L1084.3 393.2 L1084.9 395.9 L1085.5 398.6 L1086.1 401.3 L1086.7 404.1 L1087.2 406.8 L1087.7 409.4 L1088.1 412.1 L1088.5 414.8 L1088.9 417.5 L1089.3 420.1 L1089.6 422.8 L1089.9 425.4 L1090.1 428 L1090.4 430.6 L1090.6 433.2 L1090.8 435.8 L1090.8 435.8"/>
<path d="M885 154.5 L886.7 157.1 L888.4 159.7 L890.2 162.3 L891.9 165 L893.6 167.6 L895.3 170.3 L897.1 173 L898.8 175.8 L900.5 178.5 L902.3 181.3 L904 184 L905.7 186.8 L907.4 189.6 L909.2 192.4 L910.9 195.2 L912.6 198.1 L914.3 200.9 L916 203.8 L917.8 206.6 L919.5 209.5 L921.2 212.4 L922.9 215.3 L924.6 218.2 L926.3 221.1 L928 224 L929.7 226.9 L931.3 229.9 L933 232.8 L934.7 235.7 L936.3 238.7 L938 241.6 L939.6 244.6 L941.3 247.5 L942.9 250.5 L944.5 253.4 L946.1 256.4 L947.7 259.4 L949.3 262.4 L950.8 265.3 L952.4 268.3 L953.9 271.3 L955.5 274.3 L957 277.3 L958.5 280.3 L960 283.2 L961.4 286.2 L962.9 289.2 L964.3 292.2 L965.8 295.2 L967.2 298.2 L968.6 301.2 L969.9 304.2 L971.3 307.2 L972.6 310.2 L974 313.2 L975.3 316.2 L976.6 319.2 L977.8 322.2 L979.1 325.2 L980.3 328.2 L981.5 331.3 L982.7 334.3 L983.9 337.3 L985 340.3 L986.1 343.3 L987.2 346.3 L988.3 349.3 L989.4 352.2 L990.4 355.2 L991.4 358.2 L992.4 361.2 L993.4 364.2 L994.3 367.2 L995.2 370.2 L996.1 373.2 L997 376.1 L997.8 379.1 L998.7 382.1 L999.5 385.1 L1000.2 388 L1001 391 L1001.7 394 L1002.4 396.9 L1003.1 399.9 L1003.8 402.8 L1004.4 405.7 L1005 408.7 L1005.6 411.6 L1006.2 414.5 L1006.7 417.4 L1007.2 420.4 L1007.7 423.3 L1008.2 426.2 L1008.6 429 L1009.1 431.9 L1009.5 434.8 L1009.8 437.7 L1010.2 440.5 L1010.5 443.4 L1010.9 446.2 L1011.2 449 L1011.4 451.8 L1011.7 454.6 L1012 457.4 L1012.2 460.2 L1012.4 462.9 L1012.6 465.7 L1012.8 468.4 L1012.9 471.1 L1013.1 473.8 L1013.2 476.4 L1013.4 479.1 L1013.5 481.7 L1013.7 484.3 L1013.8 486.9 L1013.9 489.4 L1014 491.9 L1014.2 494.4 L1014.3 496.9 L1014.4 499.3 L1014.4 499.3"/>
<path d="M932.2 86.7 L928.8 86.4 L925.5 86.3 L922.3 86.4 L919.1 86.6 L916 87 L912.9 87.6 L909.8 88.3 L906.8 89.2 L903.7 90.2 L900.7 91.4 L897.7 92.7 L894.6 94.1 L891.6 95.7 L888.5 97.4 L885.4 99.1 L882.3 101 L879.2 103 L876 105 L872.9 107.1 L869.7 109.3 L866.5 111.6 L863.2 113.9 L860 116.3 L856.7 118.7 L853.5 121.1 L850.2 123.7 L846.9 126.2 L843.6 128.8 L840.3 131.4 L837 134.1 L833.7 136.7 L830.4 139.4 L827 142.2 L823.7 144.9 L820.4 147.7 L817.1 150.5 L813.8 153.3 L810.6 156.2 L807.3 159 L804 161.9 L800.8 164.8 L797.6 167.7 L794.4 170.6 L791.2 173.5 L788 176.4 L784.9 179.4 L781.7 182.3 L778.6 185.3 L775.6 188.2 L772.5 191.2 L769.5 194.2 L766.5 197.2 L763.6 200.2 L760.6 203.2 L757.7 206.2 L754.9 209.2 L752.1 212.2 L749.3 215.3 L746.5 218.3 L743.8 221.3 L741.2 224.4 L738.5 227.4 L735.9 230.5 L733.4 233.5 L730.9 236.6 L728.4 239.6 L726 242.7 L723.7 245.8 L721.4 248.8 L719.1 251.9 L716.9 255 L714.7 258.1 L712.6 261.1 L710.5 264.2 L708.5 267.3 L706.5 270.4 L704.6 273.5 L702.7 276.6 L700.9 279.6 L699.2 282.7 L697.5 285.8 L695.8 288.9 L694.3 292 L692.7 295.1 L691.3 298.2 L689.9 301.3 L688.5 304.4 L687.2 307.5 L686 310.6 L684.8 313.7 L683.7 316.8 L682.6 319.9 L681.6 323 L680.7 326.1 L679.8 329.2 L679 332.3 L678.2 335.4 L677.5 338.5 L676.9 341.6 L676.3 344.7 L675.8 347.8 L675.4 350.8 L675 353.9 L674.7 357 L674.4 360.1 L674.2 363.2 L674.1 366.3 L674 369.4 L674 372.5 L674.1 375.6 L674.2 378.6 L674.3 381.7 L674.6 384.8 L674.9 387.9 L675.2 390.9 L675.6 394 L676.1 397.1 L676.6 400.1 L677.2 403.2 L677.9 406.3 L677.9 406.3"/>
<path d="M940 41.7 L935.2 39.1 L931.5 36.9"/>
<path d="M876.2 35.5 L880.5 35.1 L881.5 36 L880.3 37.8 L878 40.2 L875.1 42.9 L872 45.8 L868.6 48.8 L865.2 51.8 L861.7 54.9 L858.2 58.1 L854.7 61.2 L851.1 64.4 L847.6 67.6 L844 70.8 L840.5 74 L837 77.2 L833.4 80.4 L829.9 83.6 L826.5 86.9 L823 90.1 L819.5 93.3 L816.1 96.6 L812.7 99.8 L809.3 103 L806 106.3 L802.6 109.5 L799.3 112.8 L796.1 116 L792.8 119.3 L789.6 122.5 L786.5 125.8 L783.3 129 L780.2 132.3 L777.1 135.5 L774.1 138.8 L771.1 142 L768.2 145.3 L765.3 148.5 L762.4 151.8 L759.6 155 L756.8 158.3 L754 161.5 L751.3 164.8 L748.7 168 L746.1 171.3 L743.5 174.5 L741 177.8 L738.5 181.1 L736.1 184.3 L733.8 187.6 L731.4 190.8 L729.2 194.1 L727 197.3 L724.8 200.6 L722.7 203.8 L720.7 207.1 L718.7 210.4 L716.8 213.6 L714.9 216.9 L713 220.1 L711.3 223.4 L709.6 226.6 L707.9 229.9 L706.3 233.2 L704.8 236.4 L703.3 239.7 L701.9 242.9 L700.6 246.2 L699.3 249.4 L698.1 252.7 L696.9 256 L695.8 259.2 L694.8 262.5 L693.8 265.7 L692.9 269 L692 272.2 L691.2 275.5 L690.5 278.8 L689.8 282 L689.3 285.3 L688.7 288.5 L688.3 291.8 L687.9 295.1 L687.5 298.3 L687.3 301.6 L687.1 304.8 L686.9 308.1 L686.8 311.3 L686.8 314.6 L686.9 317.9 L687 321.1 L687.2 324.4 L687.5 327.6 L687.8 330.9 L688.2 334.1 L688.6 337.4 L689.1 340.7 L689.7 343.9 L690.4 347.2 L691.1 350.4 L691.8 353.7 L692.7 356.9 L693.6 360.2 L694.5 363.5 L695.6 366.7 L696.7 370 L697.8 373.2 L699 376.5 L700.3 379.8 L701.6 383 L703 386.3 L704.5 389.5 L706 392.8 L707.6 396 L709.2 399.3 L710.9 402.6 L712.7 405.8 L714.5 409.1 L716.4 412.3 L718.3 415.6 L720.3 418.8 L722.3 422.1 L722.3 422.1"/>
<path d="M1046.7 93.8 L1040.3 92 L1034.2 90.4 L1028.2 88.8 L1022.6 87.4 L1017.2 86.1 L1012 85 L1007.2 84.1 L1002.6 83.3 L998.4 82.6 L994.4 82.2 L990.8 82 L987.4 81.9 L984.3 82 L981.5 82.3 L979 82.8 L976.7 83.5 L974.6 84.3 L972.7 85.3 L971 86.5 L969.4 87.8 L968 89.2 L966.7 90.8 L965.6 92.5 L964.5 94.3 L963.5 96.2 L962.6 98.2 L961.7 100.3 L960.9 102.5 L960.2 104.7 L959.5 107 L958.8 109.4 L958.1 111.8 L957.5 114.3 L956.9 116.8 L956.3 119.4 L955.7 122 L955.1 124.6 L954.5 127.3 L953.9 130 L953.3 132.7 L952.8 135.5 L952.2 138.3 L951.6 141.1 L951 143.9 L950.4 146.7 L949.8 149.6 L949.3 152.5 L948.6 155.4 L948 158.3 L947.4 161.2 L946.8 164.1 L946.2 167.1 L945.5 170 L944.9 173 L944.2 176 L943.5 178.9 L942.9 181.9 L942.2 184.9 L941.5 188 L940.8 191 L940.1 194 L939.4 197 L938.6 200.1 L937.9 203.1 L937.1 206.1 L936.4 209.2 L935.6 212.3 L934.9 215.3 L934.1 218.4 L933.3 221.5 L932.5 224.5 L931.7 227.6 L930.9 230.7 L930 233.8 L929.2 236.9 L928.4 239.9 L927.5 243 L926.7 246.1 L925.8 249.2 L925 252.3 L924.1 255.4 L923.2 258.5 L922.3 261.6 L921.5 264.7 L920.6 267.8 L919.7 271 L918.8 274.1 L917.9 277.2 L917 280.3 L916 283.4 L915.1 286.5 L914.2 289.6 L913.3 292.8 L912.4 295.9 L911.4 299 L910.5 302.1 L909.6 305.2 L908.6 308.4 L907.7 311.5 L906.7 314.6 L905.8 317.7 L904.8 320.8 L903.9 324 L903 327.1 L902 330.2 L901.1 333.3 L900.1 336.4 L899.2 339.6 L898.2 342.7 L897.3 345.8 L897.3 345.8"/>
<path d="M958.5 141 L957.5 143.5 L956.5 146.1 L955.5 148.7 L954.5 151.3 L953.5 153.9 L952.5 156.6 L951.5 159.3 L950.5 162 L949.5 164.7 L948.5 167.4 L947.5 170.2 L946.5 173 L945.5 175.8 L944.4 178.6 L943.4 181.4 L942.3 184.2 L941.3 187.1 L940.2 189.9 L939.1 192.8 L938.1 195.7 L937 198.6 L935.9 201.5 L934.8 204.4 L933.7 207.3 L932.6 210.2 L931.5 213.1 L930.3 216.1 L929.2 219 L928.1 222 L926.9 224.9 L925.8 227.9 L924.6 230.9 L923.5 233.8 L922.3 236.8 L921.1 239.8 L919.9 242.8 L918.8 245.8 L917.6 248.8 L916.4 251.8 L915.2 254.8 L914 257.8 L912.8 260.8 L911.6 263.8 L910.4 266.8 L909.2 269.8 L908 272.8 L906.8 275.9 L905.6 278.9 L904.4 281.9 L903.2 284.9 L901.9 287.9 L900.7 291 L899.5 294 L898.3 297 L897.1 300.1 L895.9 303.1 L894.7 306.1 L893.5 309.2 L892.3 312.2 L891.1 315.2 L889.9 318.3 L888.7 321.3 L887.5 324.3 L886.3 327.4 L885.1 330.4 L884 333.4 L882.8 336.5 L881.6 339.5 L880.5 342.5 L879.3 345.6 L878.2 348.6 L877 351.6 L875.9 354.6 L874.7 357.7 L873.6 360.7 L872.5 363.7 L871.4 366.7 L870.3 369.8 L869.2 372.8 L868.1 375.8 L867 378.8 L866 381.8 L864.9 384.8 L863.9 387.8 L862.8 390.8 L861.8 393.8 L860.8 396.8 L859.8 399.8 L858.8 402.8 L857.8 405.7 L856.8 408.7 L855.8 411.7 L854.9 414.7 L853.9 417.6 L853 420.6 L852.1 423.5 L851.2 426.5 L850.3 429.4 L849.4 432.3 L848.5 435.2 L847.7 438.1 L846.8 441 L846 443.9 L845.1 446.8 L844.3 449.7 L843.5 452.6 L842.7 455.4 L841.9 458.2 L841.1 461.1 L840.4 463.9 L839.6 466.7 L838.9 469.5 L838.1 472.2 L837.4 475 L836.7 477.7 L835.9 480.4 L835.2 483.1 L834.5 485.8 L833.8 488.4 L833.1 491.1 L833.1 491.1"/>
<path d="M1022.5 145 L1020 145.8 L1017.5 146.6 L1015.2 147.5 L1012.8 148.5 L1010.5 149.5 L1008.3 150.6 L1006.1 151.8 L1003.9 153 L1001.8 154.3 L999.7 155.7 L997.7 157.1 L995.6 158.5 L993.6 160 L991.6 161.6 L989.7 163.2 L987.7 164.9 L985.8 166.6 L983.9 168.4 L982 170.2 L980.1 172 L978.2 173.9 L976.3 175.8 L974.5 177.7 L972.6 179.7 L970.7 181.7 L968.9 183.8 L967 185.9 L965.2 188 L963.3 190.1 L961.5 192.3 L959.6 194.5 L957.8 196.7 L955.9 198.9 L954 201.2 L952.2 203.5 L950.3 205.8 L948.4 208.1 L946.5 210.4 L944.7 212.8 L942.8 215.2 L940.9 217.6 L939 220 L937.1 222.4 L935.2 224.9 L933.3 227.3 L931.3 229.8 L929.4 232.3 L927.5 234.7 L925.6 237.3 L923.7 239.8 L921.7 242.3 L919.8 244.8 L917.9 247.4 L915.9 249.9 L914 252.5 L912 255.1 L910.1 257.6 L908.1 260.2 L906.2 262.8 L904.2 265.4 L902.3 268 L900.3 270.7 L898.4 273.3 L896.4 275.9 L894.5 278.5 L892.5 281.2 L890.6 283.8 L888.6 286.4 L886.7 289.1 L884.8 291.7 L882.8 294.4 L880.9 297 L879 299.7 L877.1 302.3 L875.1 305 L873.2 307.7 L871.3 310.3 L869.4 313 L867.5 315.7 L865.7 318.3 L863.8 321 L861.9 323.7 L860 326.3 L858.2 329 L856.3 331.6 L854.5 334.3 L852.7 337 L850.9 339.6 L849.1 342.3 L847.3 344.9 L845.5 347.6 L843.7 350.2 L842 352.9 L840.2 355.5 L838.5 358.2 L836.7 360.8 L835 363.4 L833.3 366.1 L831.7 368.7 L830 371.3 L828.3 373.9 L826.7 376.5 L825 379.1 L823.4 381.7 L821.8 384.3 L820.2 386.9 L818.7 389.4 L817.1 392 L815.6 394.6 L814 397.1 L812.5 399.6 L811 402.1 L809.5 404.7 L808 407.2 L806.6 409.6 L805.1 412.1 L803.7 414.6 L802.3 417 L800.9 419.5 L799.5 421.9 L799.5 421.9"/>
<path d="M1105.6 144 L1101.7 143.6 L1098 143.2 L1094.4 143 L1090.8 142.8 L1087.4 142.7 L1084.1 142.6 L1081 142.7 L1077.9 142.8 L1074.9 143 L1072 143.3 L1069.3 143.7 L1066.6 144.1 L1064 144.7 L1061.5 145.3 L1059.1 145.9 L1056.8 146.7 L1054.5 147.5 L1052.3 148.4 L1050.2 149.3 L1048.2 150.4 L1046.2 151.5 L1044.3 152.6 L1042.4 153.8 L1040.6 155.1 L1038.8 156.4 L1037 157.8 L1035.3 159.3 L1033.7 160.8 L1032.1 162.3 L1030.5 163.9 L1028.9 165.6 L1027.3 167.3 L1025.8 169 L1024.3 170.8 L1022.8 172.6 L1021.3 174.5 L1019.9 176.4 L1018.4 178.3 L1017 180.3 L1015.5 182.3 L1014.1 184.3 L1012.6 186.4 L1011.2 188.4 L1009.8 190.6 L1008.3 192.7 L1006.9 194.9 L1005.5 197.1 L1004 199.3 L1002.6 201.6 L1001.1 203.8 L999.6 206.1 L998.2 208.4 L996.7 210.8 L995.2 213.1 L993.7 215.5 L992.2 217.8 L990.7 220.2 L989.2 222.7 L987.6 225.1 L986.1 227.5 L984.5 230 L983 232.4 L981.4 234.9 L979.8 237.4 L978.2 239.9 L976.6 242.4 L974.9 245 L973.3 247.5 L971.6 250 L970 252.6 L968.3 255.2 L966.6 257.7 L964.9 260.3 L963.2 262.9 L961.5 265.5 L959.8 268.1 L958 270.7 L956.3 273.3 L954.5 275.9 L952.7 278.5 L951 281.1 L949.2 283.7 L947.4 286.4 L945.6 289 L943.7 291.7 L941.9 294.3 L940.1 296.9 L938.2 299.6 L936.4 302.2 L934.5 304.9 L932.7 307.5 L930.8 310.2 L928.9 312.8 L927.1 315.5 L925.2 318.1 L923.3 320.8 L921.4 323.5 L919.5 326.1 L917.6 328.8 L915.7 331.4 L913.8 334.1 L911.9 336.7 L910 339.4 L908.1 342 L906.2 344.7 L904.2 347.3 L902.3 349.9 L900.4 352.6 L898.5 355.2 L896.6 357.8 L894.7 360.5 L892.8 363.1 L890.8 365.7 L888.9 368.3 L887 370.9 L885.1 373.5 L883.2 376.1 L881.3 378.7 L879.5 381.3 L877.6 383.9 L877.6 383.9"/>
<path d="M983.5 175 L981.4 176.7 L979.3 178.4 L977.2 180.1 L975.1 181.9 L973.1 183.7 L971 185.5 L968.9 187.4 L966.9 189.3 L964.8 191.3 L962.8 193.3 L960.7 195.3 L958.7 197.3 L956.6 199.4 L954.6 201.5 L952.5 203.6 L950.5 205.7 L948.4 207.9 L946.3 210 L944.3 212.2 L942.2 214.5 L940.1 216.7 L938 219 L936 221.2 L933.9 223.5 L931.8 225.8 L929.7 228.2 L927.6 230.5 L925.5 232.8 L923.4 235.2 L921.3 237.6 L919.2 240 L917.1 242.4 L915 244.8 L912.9 247.2 L910.8 249.7 L908.7 252.1 L906.6 254.6 L904.5 257 L902.3 259.5 L900.2 262 L898.1 264.5 L896 267 L893.9 269.5 L891.8 272 L889.7 274.5 L887.6 277.1 L885.5 279.6 L883.4 282.1 L881.3 284.7 L879.2 287.2 L877.1 289.7 L875 292.3 L872.9 294.8 L870.8 297.4 L868.8 300 L866.7 302.5 L864.7 305.1 L862.6 307.7 L860.6 310.2 L858.5 312.8 L856.5 315.4 L854.5 317.9 L852.5 320.5 L850.5 323.1 L848.5 325.6 L846.5 328.2 L844.6 330.8 L842.6 333.3 L840.7 335.9 L838.7 338.5 L836.8 341 L834.9 343.6 L833 346.2 L831.1 348.7 L829.2 351.3 L827.4 353.8 L825.5 356.3 L823.7 358.9 L821.9 361.4 L820.1 363.9 L818.3 366.5 L816.5 369 L814.7 371.5 L813 374 L811.3 376.5 L809.6 379 L807.9 381.5 L806.2 383.9 L804.5 386.4 L802.8 388.9 L801.2 391.3 L799.6 393.7 L798 396.2 L796.4 398.6 L794.8 401 L793.2 403.4 L791.7 405.8 L790.2 408.1 L788.6 410.5 L787.1 412.8 L785.6 415.1 L784.1 417.5 L782.7 419.7 L781.2 422 L779.8 424.3 L778.3 426.5 L776.9 428.7 L775.5 430.9 L774 433.1 L772.6 435.3 L772.6 435.3"/>
<path d="M1117 196.2 L1113.3 195.7 L1109.7 195.3 L1106.1 194.9 L1102.6 194.5 L1099.1 194.2 L1095.6 193.9 L1092.2 193.7 L1088.8 193.5 L1085.4 193.4 L1082.1 193.3 L1078.8 193.3 L1075.6 193.3 L1072.4 193.3 L1069.2 193.4 L1066 193.6 L1062.9 193.7 L1059.8 194 L1056.8 194.3 L1053.7 194.6 L1050.7 195 L1047.8 195.4 L1044.8 195.8 L1041.9 196.3 L1039 196.9 L1036.2 197.5 L1033.3 198.1 L1030.5 198.8 L1027.7 199.5 L1024.9 200.3 L1022.1 201.1 L1019.4 201.9 L1016.6 202.8 L1013.9 203.7 L1011.2 204.6 L1008.5 205.6 L1005.8 206.6 L1003.1 207.7 L1000.5 208.8 L997.8 209.9 L995.2 211.1 L992.5 212.3 L989.9 213.5 L987.2 214.8 L984.6 216.1 L982 217.4 L979.4 218.7 L976.8 220.1 L974.2 221.5 L971.5 222.9 L968.9 224.4 L966.3 225.9 L963.7 227.4 L961.1 228.9 L958.5 230.5 L955.9 232.1 L953.3 233.7 L950.7 235.3 L948.1 236.9 L945.5 238.6 L942.8 240.3 L940.2 242 L937.6 243.7 L935 245.4 L932.4 247.2 L929.8 249 L927.1 250.8 L924.5 252.6 L921.9 254.4 L919.3 256.2 L916.6 258.1 L914 259.9 L911.4 261.8 L908.8 263.7 L906.1 265.6 L903.5 267.5 L900.9 269.4 L898.2 271.3 L895.6 273.3 L893 275.2 L890.3 277.2 L887.7 279.2 L885.1 281.1 L882.5 283.1 L879.8 285.1 L877.2 287.1 L874.6 289.1 L872 291.1 L869.4 293.1 L866.8 295.1 L864.2 297.2 L861.6 299.2 L859 301.2 L856.4 303.3 L853.8 305.3 L851.2 307.4 L848.7 309.4 L846.1 311.4 L843.5 313.5 L841 315.5 L838.4 317.6 L835.9 319.6 L833.4 321.7 L830.8 323.8 L828.3 325.8 L825.8 327.9 L823.3 329.9 L820.8 331.9 L818.4 334 L815.9 336 L813.5 338.1 L811 340.1 L808.6 342.1 L806.2 344.2 L803.7 346.2 L801.3 348.2 L798.9 350.2 L796.6 352.2 L794.2 354.2 L791.8 356.2 L789.5 358.2 L789.5 358.2"/>
<path d="M1175.6 221.1 L1171.8 218.1 L1167.9 215 L1163.9 212 L1159.9 209 L1155.8 206 L1151.6 203 L1147.4 200 L1143.2 197 L1138.8 194 L1134.5 191 L1130 188 L1125.6 185 L1121.1 182.1 L1116.5 179.1 L1111.9 176.2 L1107.2 173.3 L1102.5 170.4 L1097.8 167.4 L1093.1 164.6 L1088.3 161.7 L1083.5 158.8 L1078.6 156 L1073.8 153.1 L1068.9 150.3 L1064 147.5 L1059.1 144.8 L1054.2 142 L1049.3 139.3 L1044.4 136.6 L1039.4 133.9 L1034.5 131.2 L1029.6 128.6 L1024.7 126 L1019.9 123.5 L1015 121 L1010.2 118.5 L1005.4 116.1 L1000.7 113.8 L995.9 111.5 L991.3 109.2 L986.7 107 L982.1 104.9 L977.7 102.9 L973.2 100.9 L968.9 99.1 L964.6 97.3 L960.5 95.7 L956.4 94.1 L952.4 92.7 L948.5 91.4 L944.6 90.2 L940.9 89.2 L937.3 88.3 L933.7 87.6 L930.2 87 L926.8 86.7 L923.5 86.4 L920.2 86.4 L917 86.5 L913.8 86.8 L910.7 87.3 L907.6 87.9 L904.5 88.7 L901.4 89.7 L898.3 90.8 L895.2 92 L892 93.4 L888.9 94.9 L885.7 96.5 L882.5 98.2 L879.3 100 L876.1 101.9 L872.8 103.9 L869.6 106 L866.3 108.1 L862.9 110.3 L859.6 112.6 L856.2 114.9 L852.8 117.3 L849.4 119.8 L846 122.3 L842.5 124.8 L839.1 127.3 L835.6 129.9 L832.2 132.6 L828.7 135.2 L825.3 137.9 L821.8 140.6 L818.3 143.4 L814.9 146.1 L811.4 148.9 L808 151.7 L804.5 154.5 L801.1 157.4 L797.7 160.2 L794.3 163.1 L790.9 166 L787.6 168.9 L784.2 171.8 L780.9 174.7 L777.6 177.7 L774.3 180.6 L771.1 183.6 L767.9 186.5 L764.7 189.5 L761.5 192.5 L758.4 195.5 L755.3 198.5 L752.2 201.5 L749.2 204.5 L746.2 207.5 L743.2 210.5 L740.3 213.5 L737.4 216.5 L734.6 219.6 L731.8 222.6 L729 225.7 L726.3 228.7 L723.7 231.8 L721 234.8 L721 234.8"/>
<path d="M1164.4 261.1 L1161.4 261.6 L1158.4 262 L1155.4 262.5 L1152.4 263 L1149.4 263.6 L1146.4 264.1 L1143.4 264.7 L1140.5 265.3 L1137.5 265.9 L1134.5 266.5 L1131.6 267.1 L1128.6 267.8 L1125.6 268.4 L1122.7 269.1 L1119.7 269.8 L1116.8 270.5 L1113.8 271.2 L1110.9 272 L1107.9 272.7 L1105 273.5 L1102 274.3 L1099.1 275.1 L1096.2 275.9 L1093.2 276.7 L1090.3 277.5 L1087.3 278.4 L1084.4 279.2 L1081.4 280.1 L1078.5 281 L1075.5 281.9 L1072.5 282.8 L1069.6 283.7 L1066.6 284.6 L1063.7 285.6 L1060.7 286.5 L1057.7 287.5 L1054.8 288.4 L1051.8 289.4 L1048.8 290.4 L1045.8 291.4 L1042.9 292.4 L1039.9 293.4 L1036.9 294.4 L1033.9 295.4 L1030.9 296.4 L1027.9 297.5 L1024.9 298.5 L1021.9 299.6 L1018.9 300.6 L1015.9 301.7 L1012.9 302.7 L1009.8 303.8 L1006.8 304.9 L1003.8 305.9 L1000.8 307 L997.7 308.1 L994.7 309.2 L991.7 310.3 L988.6 311.4 L985.6 312.5 L982.5 313.6 L979.5 314.7 L976.4 315.8 L973.4 316.9 L970.3 318 L967.3 319.1 L964.2 320.2 L961.1 321.3 L958.1 322.4 L955 323.5 L951.9 324.6 L948.9 325.7 L945.8 326.8 L942.7 327.9 L939.6 329 L936.6 330.1 L933.5 331.2 L930.4 332.3 L927.3 333.3 L924.2 334.4 L921.2 335.5 L918.1 336.6 L915 337.7 L911.9 338.7 L908.8 339.8 L905.7 340.8 L902.7 341.9 L899.6 342.9 L896.5 344 L893.4 345 L890.3 346 L887.2 347 L884.2 348 L881.1 349 L878 350 L874.9 351 L871.8 352 L868.7 353 L865.7 353.9 L862.6 354.9 L859.5 355.8 L856.4 356.7 L853.4 357.7 L850.3 358.6 L847.2 359.5 L844.1 360.3 L841.1 361.2 L838 362.1 L834.9 362.9 L831.8 363.8 L828.8 364.6 L825.7 365.4 L822.6 366.2 L819.5 367 L816.5 367.8 L813.4 368.5 L810.3 369.3 L807.2 370 L804.2 370.7 L801.1 371.4 L798 372.1 L794.9 372.8 L791.9 373.4 L788.8 374.1 L785.7 374.7 L782.6 375.3 L779.5 375.9 L776.4 376.5 L773.3 377 L770.3 377.5 L770.3 377.5"/>
<path d="M1155.6 173.3 L1152.5 173.4 L1149.4 173.5 L1146.4 173.7 L1143.5 174 L1140.7 174.3 L1137.9 174.7 L1135.2 175.1 L1132.5 175.6 L1130 176.1 L1127.5 176.7 L1125 177.3 L1122.6 178 L1120.3 178.8 L1118 179.5 L1115.7 180.4 L1113.6 181.3 L1111.4 182.2 L1109.3 183.2 L1107.2 184.3 L1105.2 185.3 L1103.2 186.5 L1101.3 187.6 L1099.4 188.8 L1097.5 190.1 L1095.6 191.4 L1093.8 192.7 L1091.9 194.1 L1090.1 195.5 L1088.3 196.9 L1086.6 198.4 L1084.8 199.9 L1083.1 201.5 L1081.3 203.1 L1079.6 204.7 L1077.9 206.3 L1076.2 208 L1074.5 209.7 L1072.8 211.4 L1071.1 213.2 L1069.4 215 L1067.7 216.8 L1066 218.6 L1064.3 220.4 L1062.6 222.3 L1060.8 224.2 L1059.1 226.1 L1057.4 228.1 L1055.6 230 L1053.9 232 L1052.1 234 L1050.4 236 L1048.6 238.1 L1046.8 240.1 L1045 242.2 L1043.2 244.3 L1041.4 246.3 L1039.5 248.5 L1037.7 250.6 L1035.8 252.7 L1033.9 254.9 L1032 257 L1030.1 259.2 L1028.2 261.4 L1026.2 263.5 L1024.3 265.7 L1022.3 268 L1020.3 270.2 L1018.3 272.4 L1016.3 274.6 L1014.3 276.9 L1012.2 279.1 L1010.1 281.4 L1008.1 283.6 L1006 285.9 L1003.9 288.2 L1001.7 290.5 L999.6 292.7 L997.4 295 L995.3 297.3 L993.1 299.6 L990.9 301.9 L988.7 304.2 L986.5 306.5 L984.3 308.8 L982 311.1 L979.7 313.4 L977.5 315.7 L975.2 318.1 L972.9 320.4 L970.6 322.7 L968.3 325 L966 327.3 L963.6 329.6 L961.3 331.9 L958.9 334.2 L956.6 336.5 L954.2 338.8 L951.8 341.1 L949.5 343.4 L947.1 345.7 L944.7 348 L942.3 350.3 L939.9 352.6 L937.4 354.8 L935 357.1 L932.6 359.4 L930.2 361.6 L927.7 363.9 L925.3 366.1 L922.9 368.3 L920.4 370.6 L918 372.8 L915.5 375 L913.1 377.2 L910.6 379.4 L908.2 381.6 L905.7 383.7 L903.3 385.9 L900.8 388 L898.4 390.2 L898.4 390.2"/>
</g>
<g fill="none" stroke="#747474" stroke-width="1.25" stroke-linecap="round">
<path d="M857.3 75.8 L856.1 75.4 L854.8 75.1 L853.5 74.8 L852.1 74.6 L850.7 74.4 L849.2 74.3 L847.6 74.2 L846 74.2 L844.3 74.2 L842.6 74.3 L840.8 74.5 L838.9 74.7 L837 74.9 L834.9 75.2 L834 75.4"/>
<path d="M790 88.3 L792.7 86.7 L795.4 85.1 L798.1 83.4 L800.8 81.8 L802.7 80.7"/>
<path d="M809.4 99.4 L806.8 100.7 L804.3 102 L801.7 103.3 L799.1 104.6 L796.5 105.9 L796.3 106"/>
<path d="M856.7 116.7 L858.3 115.5 L860 114.3 L861.6 113 L863.2 111.9 L864.8 110.7 L866.4 109.5 L868.1 108.4 L869.7 107.2 L871.3 106.1 L872.9 105 L873.3 104.7"/>
<path d="M866.7 132.3 L865.5 131.6 L864.2 130.9 L862.9 130.2 L861.7 129.6 L860.4 128.9 L859.1 128.3 L857.8 127.7 L856.5 127.2 L855.2 126.6 L853.9 126.1 L852.6 125.6 L851.3 125.1 L851 125"/>
<path d="M885 154.5 L884.1 153.3 L883.1 152.1 L882.2 150.9 L881.2 149.7 L880.3 148.5 L879.5 147.5"/>
<path d="M932.2 86.7 L933.9 86.9 L935.7 87.2 L937.4 87.4 L939.2 87.8 L941 88.2 L942.8 88.6 L944.7 89 L946.6 89.5 L948.5 90 L950.4 90.6 L952.4 91.2 L954.4 91.8 L956.4 92.5 L958.4 93.2 L960.5 93.9 L962.5 94.6 L964.6 95.4 L966.8 96.2 L968.9 97.1 L971.1 98 L973.3 98.8 L975.5 99.8 L977.7 100.7 L980 101.7 L982.3 102.6 L984.6 103.7 L986.9 104.7 L989.2 105.7 L991.5 106.8 L993.9 107.9 L996.3 109 L998.7 110.1 L1001.1 111.2 L1003.5 112.3 L1005.9 113.5 L1008.4 114.7 L1010.8 115.9 L1013.3 117.1 L1015.7 118.3 L1018.2 119.5 L1020.7 120.7 L1023.2 122 L1025.7 123.2 L1028.2 124.5 L1030.7 125.8 L1033.2 127.1 L1035.8 128.4 L1038.3 129.7 L1040.8 131 L1043.4 132.3 L1045.9 133.6 L1048.4 135 L1050.6 136.1"/>
<path d="M940 42 C941.7 42.9 946.7 45.6 950 47.4 C953.3 49.2 956.7 51.3 960 53 C963.3 54.7 966.7 56.1 970 57.6 C973.3 59.1 976.7 60.5 980 62 C983.3 63.5 986.7 65.1 990 66.8 C993.3 68.5 996.7 70.2 1000 72 C1003.3 73.8 1006.7 75.8 1010 77.8 C1013.3 79.8 1016.8 82.1 1020 84 C1023.2 85.9 1027.5 88.2 1029 89"/>
<path d="M1046.7 93.8 L1050 94.7 L1053.3 95.7 L1056.6 96.7 L1060 97.7 L1063.5 98.7 L1067 99.7 L1070.5 100.8 L1074.1 101.9 L1077.7 103 L1081 104"/>
<path d="M958.5 141 L959.1 139.8 L959.6 138.6 L960.2 137.4 L960.7 136.2 L961.3 135 L961.9 133.9 L962.4 132.7 L963 131.6 L963.6 130.4 L964.2 129.3 L964.7 128.2 L965.3 127.1 L965.9 126 L966.5 125"/>
<path d="M1022.5 145 L1023.6 144.5 L1024.6 143.9 L1025.7 143.4 L1026.8 142.9 L1027.9 142.5 L1029.1 142 L1030.2 141.6 L1030.5 141.5"/>
<path d="M1105.6 144 L1107.4 144.1 L1109.3 144.3 L1110.4 144.4"/>
<path d="M983.5 175 L984.6 174.2 L985.6 173.4 L986.7 172.6 L987.7 171.8 L988.8 171 L989.9 170.3 L991 169.5 L991 169.5"/>
<path d="M1117 196.2 L1118.9 196.5 L1120.8 196.9 L1122.7 197.2 L1124.6 197.6 L1126.5 197.9 L1128.5 198.3 L1130.4 198.7 L1132.4 199.1 L1134.3 199.5 L1136.3 199.9 L1136.7 200"/>
<path d="M1175.6 221.1 L1177.5 222.6 L1179.4 224.1 L1181.3 225.6 L1183.2 227.1 L1185 228.6 L1186.8 230.1 L1188.7 231.6 L1190.5 233.2 L1192.2 234.7 L1194 236.2 L1195.7 237.7 L1197.4 239.2 L1199.2 240.7 L1200.8 242.2 L1202.5 243.8 L1204.1 245.3 L1205.8 246.8 L1207.4 248.3 L1208.4 249.3"/>
<path d="M1164.4 261.1 L1165.9 260.8 L1167.3 260.5 L1168.8 260.2 L1170.2 259.9 L1171.6 259.6"/>
<path d="M1155.6 173.3 L1157.1 173.2 L1158.6 173.1 L1160.1 173 L1161.6 172.9 L1162.2 172.9"/>
</g>
<g fill="none" stroke="#ff1a00" stroke-width="1.8" stroke-dasharray="1.6 2.08">
<path d="M856.3 74.7 L855.9 76.1 L855.4 77.5 L854.9 78.9 L854.5 80.3 L854 81.8 L853.5 83.2 L853 84.7 L852.5 86.2 L852 87.7 L851.5 89.1 L851 90.6 L850.5 92.1 L850 93.6 L849.5 95.1 L849 96.7 L848.5 98.2 L848 99.7 L847.5 101.2 L847 102.8 L846.5 104.3 L846 105.8 L845.5 107.4 L845 108.9 L844.5 110.5 L844 112 L843.5 113.6 L843.1 115.1 L842.6 116.7 L842.1 118.3 L841.6 119.8 L841.1 121.4 L840.7 123 L840.2 124.5 L839.7 126.1 L839.3 127.7 L838.8 129.3 L838.4 130.8 L837.9 132.4 L837.5 134 L837 135.6 L836.6 137.1 L836.1 138.7 L835.7 140.3 L835.3 141.9 L834.9 143.5 L834.4 145.1 L834 146.7 L833.6 148.3 L833.2 149.8 L832.8 151.4 L832.4 153 L832 154.6 L831.6 156.2 L831.2 157.8 L830.9 159.4 L830.5 161 L830.1 162.6 L829.8 164.2 L829.4 165.8 L829.1 167.4 L828.7 169 L828.4 170.6 L828 172.2 L827.7 173.8 L827.4 175.4 L827 177 L826.7 178.6 L826.4 180.2 L826.1 181.8 L825.8 183.4 L825.5 185 L825.2 186.6 L824.9 188.2 L824.7 189.8 L824.4 191.4 L824.1 193 L823.9 194.7 L823.6 196.3 L823.4 197.9 L823.1 199.5 L822.9 201.1 L822.7 202.7 L822.4 204.3 L822.2 205.9 L822 207.5 L821.8 209.1 L821.6 210.7 L821.4 212.3 L821.2 214 L821 215.6 L820.8 217.2 L820.7 218.8 L820.5 220.4 L820.3 222 L820.2 223.6 L820 225.2 L819.9 226.8 L819.7 228.4 L819.6 230.1 L819.5 231.7 L819.4 233.3 L819.3 234.9 L819.1 236.5 L819 238.1 L818.9 239.7 L818.9 241.3 L818.8 243 L818.7 244.6 L818.6 246.2 L818.6 247.8 L818.5 249.4 L818.5 251 L818.4 252.6 L818.4 254.3 L818.3 255.9 L818.3 257.5 L818.3 259.1 L818.3 260.7 L818.3 262.3 L818.3 263.9 L818.3 265.6 L818.3 267.2 L818.3 268.8 L818.3 270.4 L818.4 272 L818.4 273.6 L818.4 275.2 L818.5 276.9 L818.5 278.5 L818.6 280.1 L818.7 281.7 L818.7 283.3 L818.8 284.9 L818.9 286.5 L819 288.2 L819.1 289.8 L819.2 291.4 L819.3 292.7"/>
<path d="M911.7 63.3 L910.7 64.4 L909.8 65.5 L908.9 66.6 L907.9 67.8 L907 69 L906.1 70.3 L905.1 71.6 L904.2 72.8 L903.3 74.1 L902.4 75.5 L901.4 76.8 L900.5 78.2 L899.6 79.6 L898.7 80.9 L897.7 82.3 L896.8 83.8 L895.9 85.2 L895 86.6 L894 88.1 L893.1 89.5 L892.2 91 L891.2 92.5 L890.3 93.9 L889.4 95.4 L888.4 96.9 L887.5 98.4 L886.6 99.9 L885.7 101.4 L884.7 102.9 L883.8 104.4 L882.9 106 L881.9 107.5 L881 109 L880.1 110.5 L879.1 112.1 L878.2 113.6 L877.3 115.2 L876.4 116.7 L875.4 118.2 L874.5 119.8 L873.6 121.3 L872.7 122.9 L871.7 124.5 L870.8 126 L869.9 127.6 L869 129.1 L868.1 130.7 L867.2 132.3 L866.3 133.8 L865.3 135.4 L864.4 137 L863.5 138.6 L862.6 140.1 L861.7 141.7 L860.8 143.3 L859.9 144.9 L859 146.4 L858.2 148 L857.3 149.6 L856.4 151.2 L855.5 152.8 L854.6 154.4 L853.8 155.9 L852.9 157.5 L852 159.1 L851.2 160.7 L850.3 162.3 L849.4 163.9 L848.6 165.5 L847.7 167.1 L846.9 168.7 L846 170.2 L845.2 171.8 L844.4 173.4 L843.5 175 L842.7 176.6 L841.9 178.2 L841.1 179.8 L840.3 181.4 L839.5 183 L838.6 184.6 L837.8 186.2 L837.1 187.8 L836.3 189.4 L835.5 191 L834.7 192.6 L833.9 194.2 L833.1 195.8 L832.4 197.4 L831.6 199 L830.9 200.6 L830.1 202.2 L829.4 203.8 L828.6 205.4 L827.9 207 L827.1 208.6 L826.4 210.2 L825.7 211.8 L825 213.5 L824.3 215.1 L823.6 216.7 L822.9 218.3 L822.2 219.9 L821.5 221.5 L820.8 223.1 L820.1 224.7 L819.5 226.3 L818.8 227.9 L818.2 229.5 L817.5 231.1 L816.9 232.7 L816.2 234.3 L815.6 236 L815 237.6 L814.4 239.2 L813.7 240.8 L813.1 242.4 L812.5 244 L812 245.6 L811.4 247.2 L810.8 248.8 L810.2 250.4 L809.6 252 L809.1 253.7 L808.5 255.3 L808 256.9 L807.5 258.5 L806.9 260.1 L806.4 261.7 L805.9 263.3 L805.4 264.9 L804.9 266.5 L804.4 268.2 L803.9 269.8 L803.4 271.4 L802.9 273 L802.5 274.6 L802 276.2 L801.6 277.8 L801.1 279.4 L800.7 281 L800.3 282.7 L799.8 284.3 L799.4 285.9 L799 287.5 L798.6 289.1 L798.2 290.7 L798 291.7"/>
<path d="M924.5 48.3 L923 48.4 L921.6 48.6 L920.2 48.9 L919 49.4 L917.9 49.9 L916.8 50.6 L915.8 51.3 L914.9 52.2 L913.9 53.1 L913 54 L912.2 55.1 L911.3 56.1 L910.5 57.3 L909.6 58.4 L908.8 59.7 L908 60.9 L907.2 62.2 L906.4 63.5 L905.6 64.8 L904.8 66.2 L904 67.6 L903.2 68.9 L902.4 70.4 L901.6 71.8 L900.8 73.2 L900 74.7 L899.2 76.1 L898.4 77.6 L897.6 79.1 L896.8 80.6 L896.1 82.1 L895.3 83.6 L894.5 85.1 L893.7 86.6 L892.9 88.1 L892.1 89.6 L891.3 91.2 L890.5 92.7 L889.7 94.2 L888.9 95.8 L888.1 97.3 L887.3 98.9 L886.5 100.4 L885.7 102 L884.9 103.6 L884.1 105.1 L883.3 106.7 L882.5 108.3 L881.7 109.8 L880.9 111.4 L880.1 113 L879.3 114.6 L878.5 116.1 L877.8 117.7 L877 119.3 L876.2 120.9 L875.4 122.5 L874.6 124.1 L873.8 125.6 L873.1 127.2 L872.3 128.8 L871.5 130.4 L870.7 132 L870 133.6 L869.2 135.2 L868.4 136.8 L867.7 138.4 L866.9 140 L866.1 141.6 L865.4 143.2 L864.6 144.8 L863.9 146.4 L863.1 148 L862.4 149.6 L861.6 151.2 L860.9 152.8 L860.1 154.4 L859.4 156 L858.7 157.6 L857.9 159.2 L857.2 160.8 L856.5 162.4 L855.8 164 L855.1 165.6 L854.3 167.2 L853.6 168.8 L852.9 170.4 L852.2 172.1 L851.5 173.7 L850.8 175.3 L850.1 176.9 L849.4 178.5 L848.8 180.1 L848.1 181.7 L847.4 183.3 L846.7 184.9 L846.1 186.5 L845.4 188.2 L844.7 189.8 L844.1 191.4 L843.4 193 L842.8 194.6 L842.1 196.2 L841.5 197.8 L840.9 199.4 L840.2 201.1 L839.6 202.7 L839 204.3 L838.4 205.9 L837.8 207.5 L837.2 209.1 L836.5 210.7 L836 212.4 L835.4 214 L834.8 215.6 L834.2 217.2 L833.6 218.8 L833 220.4 L832.5 222.1 L831.9 223.7 L831.4 225.3 L830.8 226.9 L830.3 228.5 L829.7 230.1 L829.2 231.8 L828.6 233.4 L828.1 235 L827.6 236.6 L827.1 238.2 L826.6 239.8 L826.1 241.5 L825.6 243.1 L825.1 244.7 L824.6 246.3 L824.1 247.9 L823.7 249.6 L823.2 251.2 L822.7 252.8 L822.3 254.4 L821.8 256 L821.4 257.6 L820.9 259.3 L820.5 260.9 L820.1 262.5 L819.7 264.1 L819.2 265.7 L818.8 267.4 L818.4 269 L818 270.6 L817.7 272.2 L817.3 273.8 L816.9 275.4 L816.5 277.1 L816.2 278.7 L815.8 280.3 L815.5 281.9 L815.1 283.5 L814.8 285.2 L814.5 286.8 L814.1 288.4 L813.8 290 L813.5 291.6 L813.3 292.7"/>
</g>
<g fill="none" stroke="#ff1a00" stroke-width="1.5" stroke-linecap="round">
<path d="M856.3 74.7 L856.8 73.3 L857.2 71.9 L857.6 70.6 L858 69.3 L858.4 67.9 L858.8 66.7 L859.1 65.4 L859.5 64.2 L859.7 62.9 L860 61.8 L860 61.7"/>
<path d="M816.3 292.7 h6 M819.3 289.7 v6" stroke-width="1.2"/>
<path d="M911.7 63.3 L912.7 62.3 L913.8 61.4 L914.9 60.5 L915.9 59.7 L917.1 59 L917.5 58.7"/>
<path d="M795 291.7 h6 M798 288.7 v6" stroke-width="1.2"/>
<path d="M924.5 48.3 C925.3 48.3 927.8 48.4 929.5 48.6 C931.2 48.8 932.9 49 935 49.5 C937.1 50 939.7 50.8 942 51.5 C944.3 52.2 946.1 52.9 949 54 C951.9 55.1 956 56.6 959.5 57.9 C963 59.2 966.6 60.7 970 62 C973.4 63.3 976.7 64.5 980 65.7 C983.3 67 986.7 68.2 990 69.5 C993.3 70.8 996.7 72 1000 73.2 C1003.3 74.5 1006.8 75.8 1010 77 C1013.2 78.2 1016 79.3 1019 80.5 C1022 81.7 1026.5 83.4 1028 84"/>
<path d="M810.3 292.7 h6 M813.3 289.7 v6" stroke-width="1.2"/>
<path d="M952 41.6 L953.4 45 L955.2 45 Z" fill="#ff1a00" stroke-width="0.8"/>
</g>
<g fill="#ff6a50"><circle cx="1028" cy="84" r="1.3"/><circle cx="860" cy="61.7" r="1.2"/><circle cx="917.5" cy="58.7" r="1.2"/><circle cx="949" cy="54.2" r="1.1"/></g>
<circle cx="809.2" cy="292.5" r="24.1" fill="none" stroke="#ff1a00" stroke-width="2.1"/>
<g fill="none" stroke="#ffa90a" stroke-width="2.2" stroke-linecap="round">
<path d="M716.2 86.8 C716.6 87 717 87.8 718.5 88.2 C720 88.6 722.8 88.9 725 89 C727.2 89.1 729.5 88.9 732 88.6 C734.5 88.3 737 87.6 740 87 C743 86.4 746.7 85.6 750 84.8 C753.3 84 756.7 83 760 82 C763.3 81 766.7 80 770 78.9 C773.3 77.8 776.7 76.6 780 75.5 C783.3 74.4 786.7 73.3 790 72.1 C793.3 70.9 796.7 69.8 800 68.5 C803.3 67.2 806.7 65.9 810 64.6 C813.3 63.3 816.7 61.9 820 60.5 C823.3 59.1 826.7 57.6 830 56.1 C833.3 54.6 837 52.9 840 51.5 C843 50.1 845.5 49 848 47.9 C850.5 46.8 853 45.9 855 45 C857 44.1 858.5 43.4 860 42.6 C861.5 41.9 863 41.1 864 40.5 C865 39.9 866 39.4 866.3 39 C866.5 38.6 865.6 38.4 865.5 38.3"/>
<path d="M941.5 39.5 C942.2 40 944.1 41.4 945.5 42.3 C946.9 43.2 947.6 43.7 950 45 C952.4 46.3 956.7 48.4 960 50 C963.3 51.6 966.7 53.1 970 54.5 C973.3 55.9 976.7 57.2 980 58.5 C983.3 59.8 986.7 60.9 990 62.1 C993.3 63.3 996.7 64.4 1000 65.5 C1003.3 66.6 1006.7 67.6 1010 68.6 C1013.3 69.6 1016.7 70.5 1020 71.5 C1023.3 72.5 1026.7 73.4 1030 74.3 C1033.3 75.2 1036.7 76.1 1040 77 C1043.3 77.9 1046.7 78.8 1050 79.6 C1053.3 80.4 1057 81.3 1060 82 C1063 82.7 1065.5 83.3 1068 83.9 C1070.5 84.5 1072.8 85.1 1075 85.5 C1077.2 85.9 1079.1 86.2 1081 86.5 C1082.9 86.8 1085.6 87.1 1086.5 87.2"/>
</g>
<path d="M976 58 C978.3 59 986 62.2 990 64 C994 65.8 996.7 67 1000 68.5 C1003.3 70 1006.7 71.5 1010 73 C1013.3 74.5 1016.7 76 1020 77.8 C1023.3 79.6 1026.7 82 1030 84 C1033.3 86 1035.5 87.4 1040 90 C1044.5 92.6 1050.7 96 1057 99.5 C1063.3 103 1070.8 107 1078 111 C1085.2 115 1090.2 117.5 1100 123.3 C1109.8 129.1 1124.4 137.5 1137 145.5 C1149.6 153.5 1169.2 166.8 1175.6 171.1" fill="none" stroke="#ffa90a" stroke-width="1.55" stroke-dasharray="1.45 2.23"/>
<path d="M1175.6 171.1 L1202.2 191.8" fill="none" stroke="#ffa90a" stroke-width="1.45" stroke-linecap="round"/>
<circle cx="1202.2" cy="191.8" r="1.3" fill="#ff6a30"/>
<text class="gl" transform="translate(902.5 25.3) scale(1.09 1)">+90°</text>
<text class="gl" transform="translate(902.5 122.4) scale(1.09 1)">+60°</text>
<text class="gl" transform="translate(902.5 220.3) scale(1.09 1)">+30°</text>
<text class="gl" transform="translate(902.5 428.4) scale(1.09 1)">−30°</text>
<text class="gl" transform="translate(902.5 526.3) scale(1.09 1)">−60°</text>
<text class="gl" transform="translate(902.5 624.1) scale(1.09 1)">−90°</text>
<text class="gl" transform="translate(1488.5 330.3) scale(1.09 1)">+180°</text>
<text class="gl" transform="translate(1390.8 330.3) scale(1.09 1)">+210°</text>
<text class="gl" transform="translate(1293.2 330.3) scale(1.09 1)">+240°</text>
<text class="gl" transform="translate(1195.5 330.3) scale(1.09 1)">+270°</text>
<text class="gl" transform="translate(1097.9 330.3) scale(1.09 1)">+300°</text>
<text class="gl" transform="translate(1000.2 330.3) scale(1.09 1)">+330°</text>
<text class="gl" transform="translate(902.5 330.3) scale(1.09 1)">+0°</text>
<text class="gl" transform="translate(804.9 330.3) scale(1.09 1)">+30°</text>
<text class="gl" transform="translate(707.2 330.3) scale(1.09 1)">+60°</text>
<text class="gl" transform="translate(609.6 330.3) scale(1.09 1)">+90°</text>
<text class="gl" transform="translate(511.9 330.3) scale(1.09 1)">+120°</text>
<text class="gl" transform="translate(414.3 330.3) scale(1.09 1)">+150°</text>
<text class="gl" transform="translate(316.6 330.3) scale(1.09 1)">+180°</text>
<text class="sl" transform="translate(793.5 67) scale(.925 1)">OCT</text>
<text class="sl" transform="translate(809.2 296.4) scale(.9 1)">STA</text>
<text class="mono" x="315" y="29.6" xml:space="preserve">US005W</text>
<text class="mono" x="315" y="42.6" xml:space="preserve">Beg: 20251007 01:41:49 (sol = 193.70°)</text>
<text class="mono" x="315" y="55.6" xml:space="preserve">End: 20251007 06:04:29 (sol = 193.88°)</text>
<text class="mono" x="315" y="68.6" xml:space="preserve">--------------------------------------</text>
<text class="mono" x="315" y="81.6" xml:space="preserve">...: 21</text>
<text class="mono" x="315" y="94.6" xml:space="preserve">STA: 4</text>
<text class="mono" x="315" y="107.6" xml:space="preserve">OCT: 1</text>
<g fill="none" stroke="#676767" stroke-width="2.08" stroke-dasharray="2.08 3.44">
<path d="M74 641.5 V842.5"/>
<path d="M218 641.5 V842.5"/>
<path d="M365 641.5 V842.5"/>
<path d="M505 641.5 V842.5"/>
<path d="M650 641.5 V842.5"/>
<path d="M797 641.5 V842.5"/>
<path d="M940 641.5 V842.5"/>
<path d="M1091 641.5 V842.5"/>
<path d="M1239 641.5 V842.5"/>
<path d="M1394 641.5 V842.5"/>
<path d="M1548 641.5 V842.5"/>
<path d="M1687 641.5 V842.5"/>
</g>
<text class="mo" transform="translate(149.2 643) rotate(-90)" textLength="55" lengthAdjust="spacingAndGlyphs">APR</text>
<text class="mo" transform="translate(293.4 644) rotate(-90)" textLength="57.6" lengthAdjust="spacingAndGlyphs">MAY</text>
<text class="mo" transform="translate(436.4 642) rotate(-90)" textLength="51" lengthAdjust="spacingAndGlyphs">JUN</text>
<text class="mo" transform="translate(576.4 641) rotate(-90)" textLength="47" lengthAdjust="spacingAndGlyphs">JUL</text>
<text class="mo" transform="translate(722.9 642.7) rotate(-90)" textLength="59" lengthAdjust="spacingAndGlyphs">AUG</text>
<text class="mo" transform="translate(872.1 644) rotate(-90)" textLength="52" lengthAdjust="spacingAndGlyphs">SEP</text>
<text class="mo" transform="translate(1015.9 642.7) rotate(-90)" textLength="58" lengthAdjust="spacingAndGlyphs">OCT</text>
<text class="mo" transform="translate(1168.9 645) rotate(-90)" textLength="59" lengthAdjust="spacingAndGlyphs">NOV</text>
<text class="mo" transform="translate(1318.2 645) rotate(-90)" textLength="55" lengthAdjust="spacingAndGlyphs">DEC</text>
<text class="mo" transform="translate(1469.4 641.5) rotate(-90)" textLength="49" lengthAdjust="spacingAndGlyphs">JAN</text>
<text class="mo" transform="translate(1627.9 646) rotate(-90)" textLength="50" lengthAdjust="spacingAndGlyphs">FEB</text>
<text class="mo" transform="translate(1765.9 645) rotate(-90)" textLength="60.5" lengthAdjust="spacingAndGlyphs">MAR</text>
<path d="M970 641.5 V842.5" fill="none" stroke="#ff0000" stroke-width="2.1" stroke-dasharray="5.14 2.22"/>
<g fill="#ee82ee">
<rect x="106" y="832" width="23" height="4.1"/>
<rect x="165" y="832" width="180" height="4.1"/>
<rect x="366" y="832" width="259" height="4.1"/>
<rect x="635" y="832" width="151" height="4.1"/>
<rect x="807" y="832" width="92" height="4.1"/>
<rect x="920" y="832" width="53" height="4.1"/>
<rect x="984" y="832" width="82" height="4.1"/>
<rect x="1082" y="832" width="121" height="4.1"/>
<rect x="1244" y="832" width="82" height="4.1"/>
<rect x="1337" y="832" width="18" height="4.1"/>
<rect x="1381" y="832" width="63" height="4.1"/>
<rect x="1459" y="832" width="53" height="4.1"/>
<rect x="1523" y="832" width="24" height="4.1"/>
<rect x="1724" y="832" width="24" height="4.1"/>
<rect x="1758" y="832" width="24" height="4.1"/>
</g>
<g fill="#e114f0">
<rect x="165" y="815.6" width="23" height="4.1"/>
<rect x="223" y="815.6" width="63" height="4.1"/>
<rect x="312" y="815.6" width="28" height="4.1"/>
<rect x="366" y="815.6" width="126" height="4.1"/>
<rect x="508" y="815.6" width="146" height="4.1"/>
<rect x="704" y="815.6" width="33" height="4.1"/>
<rect x="773" y="815.6" width="72" height="4.1"/>
<rect x="871" y="815.6" width="117" height="4.1"/>
<rect x="1003" y="815.6" width="14" height="4.1"/>
<rect x="1062" y="815.6" width="151" height="4.1"/>
<rect x="1244" y="815.6" width="23" height="4.1"/>
<rect x="1293" y="815.6" width="23" height="4.1"/>
<rect x="1342" y="815.6" width="23" height="4.1"/>
<rect x="1386" y="815.6" width="43" height="4.1"/>
<rect x="1459" y="815.6" width="24" height="4.1"/>
<rect x="1548" y="815.6" width="23" height="4.1"/>
</g>
<g fill="#ff1900">
<rect x="165" y="799.2" width="23" height="4.1"/>
<rect x="258" y="799.2" width="229" height="4.1"/>
<rect x="508" y="799.2" width="107" height="4.1"/>
<rect x="626" y="799.2" width="92" height="4.1"/>
<rect x="729" y="799.2" width="97" height="4.1"/>
<rect x="949" y="799.2" width="200" height="4.1"/>
<rect x="1160" y="799.2" width="88" height="4.1"/>
<rect x="1258" y="799.2" width="186" height="4.1"/>
<rect x="1459" y="799.2" width="24" height="4.1"/>
<rect x="1552" y="799.2" width="24" height="4.1"/>
</g>
<g fill="#ffaa0f">
<rect x="194" y="782.9" width="24" height="4.1"/>
<rect x="321" y="782.9" width="186" height="4.1"/>
<rect x="518" y="782.9" width="23" height="4.1"/>
<rect x="557" y="782.9" width="126" height="4.1"/>
<rect x="807" y="782.9" width="24" height="4.1"/>
<rect x="954" y="782.9" width="19" height="4.1"/>
<rect x="988" y="782.9" width="137" height="4.1"/>
<rect x="1155" y="782.9" width="63" height="4.1"/>
<rect x="1244" y="782.9" width="23" height="4.1"/>
<rect x="1317" y="782.9" width="24" height="4.1"/>
<rect x="1396" y="782.9" width="23" height="4.1"/>
<rect x="1464" y="782.9" width="186" height="4.1"/>
</g>
<g fill="#ffeb00">
<rect x="341" y="766.5" width="29" height="4.1"/>
<rect x="410" y="766.5" width="38" height="4.1"/>
<rect x="469" y="766.5" width="23" height="4.1"/>
<rect x="527" y="766.5" width="19" height="4.1"/>
<rect x="562" y="766.5" width="28" height="4.1"/>
<rect x="616" y="766.5" width="33" height="4.1"/>
<rect x="959" y="766.5" width="29" height="4.1"/>
<rect x="1062" y="766.5" width="24" height="4.1"/>
<rect x="1101" y="766.5" width="24" height="4.1"/>
<rect x="1160" y="766.5" width="34" height="4.1"/>
<rect x="1248" y="766.5" width="24" height="4.1"/>
<rect x="1425" y="766.5" width="87" height="4.1"/>
</g>
<g fill="#a0fa28">
<rect x="420" y="750.2" width="23" height="4.1"/>
<rect x="532" y="750.2" width="24" height="4.1"/>
<rect x="567" y="750.2" width="23" height="4.1"/>
<rect x="621" y="750.2" width="121" height="4.1"/>
<rect x="969" y="750.2" width="166" height="4.1"/>
<rect x="1185" y="750.2" width="161" height="4.1"/>
<rect x="1469" y="750.2" width="24" height="4.1"/>
</g>
<g fill="#5ad200">
<rect x="429" y="733.8" width="24" height="4.1"/>
<rect x="576" y="733.8" width="157" height="4.1"/>
<rect x="993" y="733.8" width="112" height="4.1"/>
<rect x="1116" y="733.8" width="107" height="4.1"/>
<rect x="1263" y="733.8" width="29" height="4.1"/>
<rect x="1489" y="733.8" width="23" height="4.1"/>
</g>
<g fill="#00fa7d">
<rect x="591" y="717.4" width="24" height="4.1"/>
<rect x="655" y="717.4" width="117" height="4.1"/>
<rect x="1072" y="717.4" width="171" height="4.1"/>
<rect x="1263" y="717.4" width="24" height="4.1"/>
</g>
<g fill="#00e1ff">
<rect x="596" y="701.1" width="137" height="4.1"/>
<rect x="1091" y="701.1" width="29" height="4.1"/>
<rect x="1199" y="701.1" width="24" height="4.1"/>
<rect x="1273" y="701.1" width="53" height="4.1"/>
</g>
<g fill="#0018cc">
<rect x="1111" y="684.7" width="24" height="4.1"/>
</g>
<path d="M113.1 834 h7.8 M117 830.1 v7.8 M241.1 834 h7.8 M245 830.1 v7.8 M510.6 834 h7.8 M514.5 830.1 v7.8 M707.1 834 h7.8 M711 830.1 v7.8 M833.1 834 h7.8 M837 830.1 v7.8 M962.1 834 h7.8 M966 830.1 v7.8 M985.6 834 h7.8 M989.5 830.1 v7.8 M1116.1 834 h7.8 M1120 830.1 v7.8 M1295.1 834 h7.8 M1299 830.1 v7.8 M1342.1 834 h7.8 M1346 830.1 v7.8 M1413.1 834 h7.8 M1417 830.1 v7.8 M1482.1 834 h7.8 M1486 830.1 v7.8 M1531.1 834 h7.8 M1535 830.1 v7.8 M1732.1 834 h7.8 M1736 830.1 v7.8 M1766.1 834 h7.8 M1770 830.1 v7.8 M172.1 817.6 h7.8 M176 813.7 v7.8 M256.1 817.6 h7.8 M260 813.7 v7.8 M323.1 817.6 h7.8 M327 813.7 v7.8 M436.6 817.6 h7.8 M440.5 813.7 v7.8 M599.1 817.6 h7.8 M603 813.7 v7.8 M717.1 817.6 h7.8 M721 813.7 v7.8 M793.1 817.6 h7.8 M797 813.7 v7.8 M939.1 817.6 h7.8 M943 813.7 v7.8 M1005.6 817.6 h7.8 M1009.5 813.7 v7.8 M1152.6 817.6 h7.8 M1156.5 813.7 v7.8 M1250.6 817.6 h7.8 M1254.5 813.7 v7.8 M1299.6 817.6 h7.8 M1303.5 813.7 v7.8 M1349.1 817.6 h7.8 M1353 813.7 v7.8 M1403.1 817.6 h7.8 M1407 813.7 v7.8 M1467.1 817.6 h7.8 M1471 813.7 v7.8 M1555.1 817.6 h7.8 M1559 813.7 v7.8 M173.8 801.3 h7.8 M177.7 797.4 v7.8 M377.8 801.3 h7.8 M381.7 797.4 v7.8 M545.1 801.3 h7.8 M549 797.4 v7.8 M682.1 801.3 h7.8 M686 797.4 v7.8 M740.6 801.3 h7.8 M744.5 797.4 v7.8 M1075.1 801.3 h7.8 M1079 797.4 v7.8 M1217.1 801.3 h7.8 M1221 797.4 v7.8 M1305.1 801.3 h7.8 M1309 797.4 v7.8 M1467.1 801.3 h7.8 M1471 797.4 v7.8 M1560.1 801.3 h7.8 M1564 797.4 v7.8 M201.8 784.9 h7.8 M205.7 781 v7.8 M400.1 784.9 h7.8 M404 781 v7.8 M525.1 784.9 h7.8 M529 781 v7.8 M639.1 784.9 h7.8 M643 781 v7.8 M815.1 784.9 h7.8 M819 781 v7.8 M959.1 784.9 h7.8 M963 781 v7.8 M1039.6 784.9 h7.8 M1043.5 781 v7.8 M1187.6 784.9 h7.8 M1191.5 781 v7.8 M1250.6 784.9 h7.8 M1254.5 781 v7.8 M1324.9 784.9 h7.8 M1328.8 781 v7.8 M1403.1 784.9 h7.8 M1407 781 v7.8 M1545.6 784.9 h7.8 M1549.5 781 v7.8 M356.1 768.6 h7.8 M360 764.7 v7.8 M426.1 768.6 h7.8 M430 764.7 v7.8 M476.1 768.6 h7.8 M480 764.7 v7.8 M535.1 768.6 h7.8 M539 764.7 v7.8 M571.1 768.6 h7.8 M575 764.7 v7.8 M631.1 768.6 h7.8 M635 764.7 v7.8 M973.6 768.6 h7.8 M977.5 764.7 v7.8 M1070.1 768.6 h7.8 M1074 764.7 v7.8 M1109.1 768.6 h7.8 M1113 764.7 v7.8 M1178.1 768.6 h7.8 M1182 764.7 v7.8 M1256.1 768.6 h7.8 M1260 764.7 v7.8 M1467.1 768.6 h7.8 M1471 764.7 v7.8 M427.1 752.2 h7.8 M431 748.3 v7.8 M540.1 752.2 h7.8 M544 748.3 v7.8 M574.1 752.2 h7.8 M578 748.3 v7.8 M704.1 752.2 h7.8 M708 748.3 v7.8 M1094.1 752.2 h7.8 M1098 748.3 v7.8 M1270.6 752.2 h7.8 M1274.5 748.3 v7.8 M1477.1 752.2 h7.8 M1481 748.3 v7.8 M436.6 735.8 h7.8 M440.5 731.9 v7.8 M631.1 735.8 h7.8 M635 731.9 v7.8 M1039.1 735.8 h7.8 M1043 731.9 v7.8 M1168.1 735.8 h7.8 M1172 731.9 v7.8 M1275.1 735.8 h7.8 M1279 731.9 v7.8 M1497.1 735.8 h7.8 M1501 731.9 v7.8 M599.1 719.5 h7.8 M603 715.6 v7.8 M727.1 719.5 h7.8 M731 715.6 v7.8 M1187.6 719.5 h7.8 M1191.5 715.6 v7.8 M1271.1 719.5 h7.8 M1275 715.6 v7.8 M687.1 703.1 h7.8 M691 699.2 v7.8 M1102.1 703.1 h7.8 M1106 699.2 v7.8 M1207.1 703.1 h7.8 M1211 699.2 v7.8 M1300.1 703.1 h7.8 M1304 699.2 v7.8 M1119.1 686.8 h7.8 M1123 682.9 v7.8" fill="none" stroke="#fff" stroke-width="2"/>
<g class="sl">
<text transform="translate(117.8 832.1) scale(.925 1)">KSE</text>
<text transform="translate(255.3 832.1) scale(.925 1)">ETA</text>
<text transform="translate(495.8 832.1) scale(.925 1)">NZC</text>
<text transform="translate(710.8 832.1) scale(.925 1)">NDA</text>
<text transform="translate(853.3 832.1) scale(.925 1)">SPE</text>
<text transform="translate(946.8 832.1) scale(.925 1)">ARD</text>
<text transform="translate(1025.3 832.1) scale(.925 1)">EGE</text>
<text transform="translate(1142.8 832.1) scale(.925 1)">NTA</text>
<text transform="translate(1285.3 832.1) scale(.925 1)">MON</text>
<text transform="translate(1343.5 832.1) scale(.925 1)">URS</text>
<text transform="translate(1412.8 832.1) scale(.925 1)">AHY</text>
<text transform="translate(1485.8 832.1) scale(.925 1)">GUM</text>
<text transform="translate(1535.3 832.1) scale(.925 1)">OHY</text>
<text transform="translate(1736.3 832.1) scale(.925 1)">XHE</text>
<text transform="translate(1770.3 832.1) scale(.925 1)">EVI</text>
</g>
<g class="sl">
<text transform="translate(176.8 815.7) scale(.925 1)">AVB</text>
<text transform="translate(254.8 815.7) scale(.925 1)">ELY</text>
<text transform="translate(324.1 815.7) scale(.925 1)">CAM</text>
<text transform="translate(431.3 815.7) scale(.925 1)">SSG</text>
<text transform="translate(579 815.7) scale(.925 1)">PCA</text>
<text transform="translate(720.8 815.7) scale(.925 1)">AUD</text>
<text transform="translate(809.3 815.7) scale(.925 1)">AUR</text>
<text transform="translate(929.8 815.7) scale(.925 1)">DSX</text>
<text transform="translate(1010.3 815.7) scale(.925 1)">OCU</text>
<text transform="translate(1137.8 815.7) scale(.925 1)">OER</text>
<text transform="translate(1255.8 815.7) scale(.925 1)">DKD</text>
<text transform="translate(1304.8 815.7) scale(.925 1)">DSV</text>
<text transform="translate(1353.8 815.7) scale(.925 1)">ALY</text>
<text transform="translate(1407.8 815.7) scale(.925 1)">JLE</text>
<text transform="translate(1471.3 815.7) scale(.925 1)">SCC</text>
<text transform="translate(1559.8 815.7) scale(.925 1)">FEV</text>
</g>
<g class="sl">
<text transform="translate(176.8 799.4) scale(.925 1)">LYR</text>
<text transform="translate(372.8 799.4) scale(.925 1)">JMC</text>
<text transform="translate(559 799.4) scale(.925 1)">JPE</text>
<text transform="translate(672.3 799.4) scale(.925 1)">PAU</text>
<text transform="translate(774 799.4) scale(.925 1)">NIA</text>
<text transform="translate(1049.3 799.4) scale(.925 1)">STA</text>
<text transform="translate(1204.3 799.4) scale(.925 1)">NOO</text>
<text transform="translate(1351.3 799.4) scale(.925 1)">COM</text>
<text transform="translate(1471.3 799.4) scale(.925 1)">NCC</text>
<text transform="translate(1564.3 799.4) scale(.925 1)">FED</text>
</g>
<g class="sl">
<text transform="translate(206.3 783) scale(.925 1)">HVI</text>
<text transform="translate(411.3 783) scale(.925 1)">ARI</text>
<text transform="translate(529.8 783) scale(.925 1)">SZC</text>
<text transform="translate(617.8 783) scale(.925 1)">CAP</text>
<text transform="translate(819.3 783) scale(.925 1)">NUE</text>
<text transform="translate(963.8 783) scale(.925 1)">OCT</text>
<text transform="translate(1059 783) scale(.925 1)">ORI</text>
<text transform="translate(1186.8 783) scale(.925 1)">AMO</text>
<text transform="translate(1255.8 783) scale(.925 1)">DPC</text>
<text transform="translate(1329.3 783) scale(.925 1)">XVI</text>
<text transform="translate(1407.8 783) scale(.925 1)">QUA</text>
<text transform="translate(1559.8 783) scale(.925 1)">AAN</text>
</g>
<g class="sl">
<text transform="translate(352.8 766.7) scale(.925 1)">TAH</text>
<text transform="translate(431.3 766.7) scale(.925 1)">JEA</text>
<text transform="translate(480.8 766.7) scale(.925 1)">JIP</text>
<text transform="translate(539 766.7) scale(.925 1)">PPS</text>
<text transform="translate(579 766.7) scale(.925 1)">ZCS</text>
<text transform="translate(632.8 766.7) scale(.925 1)">GDR</text>
<text transform="translate(970.3 766.7) scale(.925 1)">DRA</text>
<text transform="translate(1074.3 766.7) scale(.925 1)">LUM</text>
<text transform="translate(1113.3 766.7) scale(.925 1)">RPU</text>
<text transform="translate(1177.3 766.7) scale(.925 1)">THA</text>
<text transform="translate(1260.3 766.7) scale(.925 1)">PSU</text>
<text transform="translate(1470.8 766.7) scale(.925 1)">XCB</text>
</g>
<g class="sl">
<text transform="translate(431.8 750.3) scale(.925 1)">JRC</text>
<text transform="translate(544.3 750.3) scale(.925 1)">CAN</text>
<text transform="translate(578.8 750.3) scale(.925 1)">FAN</text>
<text transform="translate(681.8 750.3) scale(.925 1)">PER</text>
<text transform="translate(1049.5 750.3) scale(.925 1)">CTA</text>
<text transform="translate(1265.8 750.3) scale(.925 1)">HYD</text>
<text transform="translate(1481.3 750.3) scale(.925 1)">XUM</text>
</g>
<g class="sl">
<text transform="translate(441.3 733.9) scale(.925 1)">COR</text>
<text transform="translate(657.3 733.9) scale(.925 1)">SDA</text>
<text transform="translate(1049.3 733.9) scale(.925 1)">LMI</text>
<text transform="translate(1167 733.9) scale(.925 1)">LEO</text>
<text transform="translate(1274.8 733.9) scale(.925 1)">EHY</text>
<text transform="translate(1500.8 733.9) scale(.925 1)">ECV</text>
</g>
<g class="sl">
<text transform="translate(603.3 717.6) scale(.925 1)">JXA</text>
<text transform="translate(715.3 717.6) scale(.925 1)">KCG</text>
<text transform="translate(1157.8 717.6) scale(.925 1)">AND</text>
<text transform="translate(1275.3 717.6) scale(.925 1)">DAD</text>
</g>
<g class="sl">
<text transform="translate(666.5 701.2) scale(.925 1)">ERI</text>
<text transform="translate(1108.3 701.2) scale(.925 1)">SLD</text>
<text transform="translate(1211.3 701.2) scale(.925 1)">ORS</text>
<text transform="translate(1299.8 701.2) scale(.925 1)">GEM</text>
</g>
<g class="sl">
<text transform="translate(1123.3 684.9) scale(.925 1)">KUM</text>
</g>
<rect x="19.6" y="641.5" width="1766" height="201" fill="none" stroke="#fff" stroke-width="1.1"/>
<path d="M20.3 842.5 v5 M265.5 842.5 v5 M510.6 842.5 v5 M755.8 842.5 v5 M1001 842.5 v5 M1246.1 842.5 v5 M1491.3 842.5 v5 M1736.5 842.5 v5" fill="none" stroke="#fff" stroke-width="1.1"/>
<text class="tk" x="19.8" y="862">0</text>
<text class="tk" x="265" y="862">50</text>
<text class="tk" x="510.1" y="862">100</text>
<text class="tk" x="755.3" y="862">150</text>
<text class="tk" x="1000.5" y="862">200</text>
<text class="tk" x="1245.6" y="862">250</text>
<text class="tk" x="1490.8" y="862">300</text>
<text class="tk" x="1736" y="862">350</text>
<text class="tk" x="902.5" y="882.2" textLength="146" lengthAdjust="spacingAndGlyphs">Solar longitude (deg)</text>
</g></svg></body></html>
